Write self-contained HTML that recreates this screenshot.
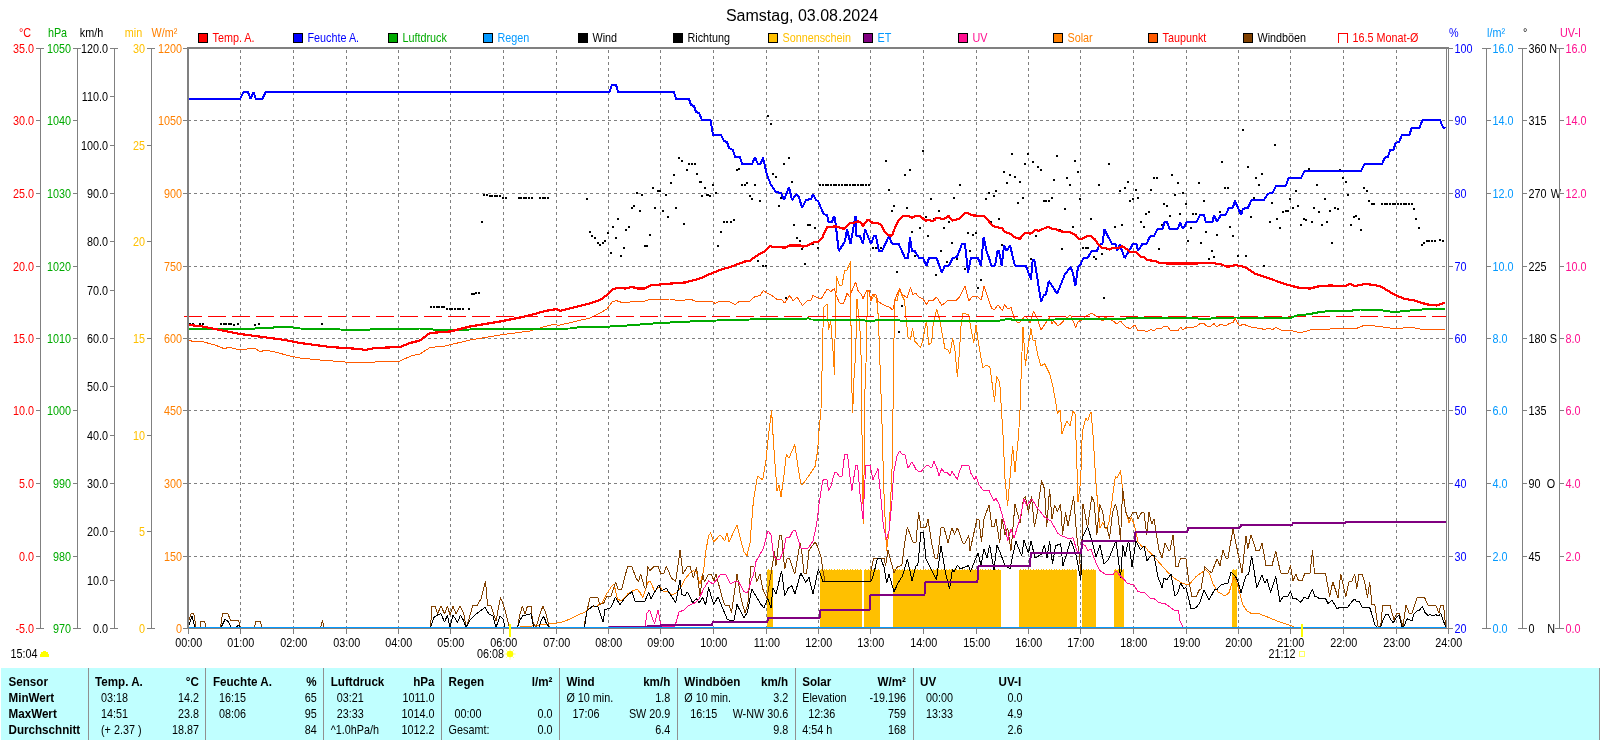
<!DOCTYPE html>
<html lang="de"><head><meta charset="utf-8"><title>Samstag, 03.08.2024</title>
<style>html,body{margin:0;padding:0;background:#fff;overflow:hidden}svg{display:block;will-change:transform}text{font-family:"Liberation Sans",sans-serif;font-size:12px}.b{font-weight:bold}.e{text-anchor:end}.m{text-anchor:middle}.ln{fill:none;stroke-linejoin:bevel;shape-rendering:crispEdges}</style></head><body>
<svg width="1600" height="740" viewBox="0 0 1600 740">
<rect x="0" y="0" width="1600" height="740" fill="#fff"/>
<text x="802" y="20.5" class="m" style="font-size:16px" fill="#000">Samstag, 03.08.2024</text>
<rect x="198.5" y="33.5" width="9" height="9" fill="#ff0000" stroke="#000" stroke-width="1" shape-rendering="crispEdges"/>
<text transform="translate(212.5 41.7) scale(0.9 1)" fill="#ff0000">Temp. A.</text>
<rect x="293.5" y="33.5" width="9" height="9" fill="#0000ff" stroke="#000" stroke-width="1" shape-rendering="crispEdges"/>
<text transform="translate(307.5 41.7) scale(0.9 1)" fill="#0000ff">Feuchte A.</text>
<rect x="388.5" y="33.5" width="9" height="9" fill="#00aa00" stroke="#000" stroke-width="1" shape-rendering="crispEdges"/>
<text transform="translate(402.5 41.7) scale(0.9 1)" fill="#00aa00">Luftdruck</text>
<rect x="483.5" y="33.5" width="9" height="9" fill="#0499ff" stroke="#000" stroke-width="1" shape-rendering="crispEdges"/>
<text transform="translate(497.5 41.7) scale(0.9 1)" fill="#0499ff">Regen</text>
<rect x="578.5" y="33.5" width="9" height="9" fill="#000" stroke="#000" stroke-width="1" shape-rendering="crispEdges"/>
<text transform="translate(592.5 41.7) scale(0.9 1)" fill="#000">Wind</text>
<rect x="673.5" y="33.5" width="9" height="9" fill="#000" stroke="#000" stroke-width="1" shape-rendering="crispEdges"/>
<text transform="translate(687.5 41.7) scale(0.9 1)" fill="#000">Richtung</text>
<rect x="768.5" y="33.5" width="9" height="9" fill="#ffc000" stroke="#000" stroke-width="1" shape-rendering="crispEdges"/>
<text transform="translate(782.5 41.7) scale(0.9 1)" fill="#ffc000">Sonnenschein</text>
<rect x="863.5" y="33.5" width="9" height="9" fill="#800080" stroke="#000" stroke-width="1" shape-rendering="crispEdges"/>
<text transform="translate(877.5 41.7) scale(0.9 1)" fill="#0499ff">ET</text>
<rect x="958.5" y="33.5" width="9" height="9" fill="#ff1090" stroke="#000" stroke-width="1" shape-rendering="crispEdges"/>
<text transform="translate(972.5 41.7) scale(0.9 1)" fill="#ff1090">UV</text>
<rect x="1053.5" y="33.5" width="9" height="9" fill="#ff8000" stroke="#000" stroke-width="1" shape-rendering="crispEdges"/>
<text transform="translate(1067.5 41.7) scale(0.9 1)" fill="#ff8000">Solar</text>
<rect x="1148.5" y="33.5" width="9" height="9" fill="#ff5a00" stroke="#000" stroke-width="1" shape-rendering="crispEdges"/>
<text transform="translate(1162.5 41.7) scale(0.9 1)" fill="#ff0000">Taupunkt</text>
<rect x="1243.5" y="33.5" width="9" height="9" fill="#804000" stroke="#000" stroke-width="1" shape-rendering="crispEdges"/>
<text transform="translate(1257.5 41.7) scale(0.9 1)" fill="#000">Windböen</text>
<path d="M1338.5 42.5V33.5H1347.5V42.5" fill="none" stroke="#ff0000" stroke-width="1" shape-rendering="crispEdges"/>
<text transform="translate(1352.5 41.7) scale(0.9 1)" fill="#ff0000">16.5 Monat-Ø</text>
<line x1="188.0" y1="120.5" x2="1446.0" y2="120.5" stroke="#808080" stroke-width="1" stroke-dasharray="3 3" shape-rendering="crispEdges"/>
<line x1="188.0" y1="193.5" x2="1446.0" y2="193.5" stroke="#808080" stroke-width="1" stroke-dasharray="3 3" shape-rendering="crispEdges"/>
<line x1="188.0" y1="266.5" x2="1446.0" y2="266.5" stroke="#808080" stroke-width="1" stroke-dasharray="3 3" shape-rendering="crispEdges"/>
<line x1="188.0" y1="338.5" x2="1446.0" y2="338.5" stroke="#808080" stroke-width="1" stroke-dasharray="3 3" shape-rendering="crispEdges"/>
<line x1="188.0" y1="410.5" x2="1446.0" y2="410.5" stroke="#808080" stroke-width="1" stroke-dasharray="3 3" shape-rendering="crispEdges"/>
<line x1="188.0" y1="483.5" x2="1446.0" y2="483.5" stroke="#808080" stroke-width="1" stroke-dasharray="3 3" shape-rendering="crispEdges"/>
<line x1="188.0" y1="556.5" x2="1446.0" y2="556.5" stroke="#808080" stroke-width="1" stroke-dasharray="3 3" shape-rendering="crispEdges"/>
<line x1="240.5" y1="50.0" x2="240.5" y2="628.0" stroke="#808080" stroke-width="1" stroke-dasharray="3 3" shape-rendering="crispEdges"/>
<line x1="293.5" y1="50.0" x2="293.5" y2="628.0" stroke="#808080" stroke-width="1" stroke-dasharray="3 3" shape-rendering="crispEdges"/>
<line x1="346.5" y1="50.0" x2="346.5" y2="628.0" stroke="#808080" stroke-width="1" stroke-dasharray="3 3" shape-rendering="crispEdges"/>
<line x1="398.5" y1="50.0" x2="398.5" y2="628.0" stroke="#808080" stroke-width="1" stroke-dasharray="3 3" shape-rendering="crispEdges"/>
<line x1="450.5" y1="50.0" x2="450.5" y2="628.0" stroke="#808080" stroke-width="1" stroke-dasharray="3 3" shape-rendering="crispEdges"/>
<line x1="503.5" y1="50.0" x2="503.5" y2="628.0" stroke="#808080" stroke-width="1" stroke-dasharray="3 3" shape-rendering="crispEdges"/>
<line x1="556.5" y1="50.0" x2="556.5" y2="628.0" stroke="#808080" stroke-width="1" stroke-dasharray="3 3" shape-rendering="crispEdges"/>
<line x1="608.5" y1="50.0" x2="608.5" y2="628.0" stroke="#808080" stroke-width="1" stroke-dasharray="3 3" shape-rendering="crispEdges"/>
<line x1="660.5" y1="50.0" x2="660.5" y2="628.0" stroke="#808080" stroke-width="1" stroke-dasharray="3 3" shape-rendering="crispEdges"/>
<line x1="713.5" y1="50.0" x2="713.5" y2="628.0" stroke="#808080" stroke-width="1" stroke-dasharray="3 3" shape-rendering="crispEdges"/>
<line x1="766.5" y1="50.0" x2="766.5" y2="628.0" stroke="#808080" stroke-width="1" stroke-dasharray="3 3" shape-rendering="crispEdges"/>
<line x1="818.5" y1="50.0" x2="818.5" y2="628.0" stroke="#808080" stroke-width="1" stroke-dasharray="3 3" shape-rendering="crispEdges"/>
<line x1="870.5" y1="50.0" x2="870.5" y2="628.0" stroke="#808080" stroke-width="1" stroke-dasharray="3 3" shape-rendering="crispEdges"/>
<line x1="923.5" y1="50.0" x2="923.5" y2="628.0" stroke="#808080" stroke-width="1" stroke-dasharray="3 3" shape-rendering="crispEdges"/>
<line x1="976.5" y1="50.0" x2="976.5" y2="628.0" stroke="#808080" stroke-width="1" stroke-dasharray="3 3" shape-rendering="crispEdges"/>
<line x1="1028.5" y1="50.0" x2="1028.5" y2="628.0" stroke="#808080" stroke-width="1" stroke-dasharray="3 3" shape-rendering="crispEdges"/>
<line x1="1080.5" y1="50.0" x2="1080.5" y2="628.0" stroke="#808080" stroke-width="1" stroke-dasharray="3 3" shape-rendering="crispEdges"/>
<line x1="1133.5" y1="50.0" x2="1133.5" y2="628.0" stroke="#808080" stroke-width="1" stroke-dasharray="3 3" shape-rendering="crispEdges"/>
<line x1="1186.5" y1="50.0" x2="1186.5" y2="628.0" stroke="#808080" stroke-width="1" stroke-dasharray="3 3" shape-rendering="crispEdges"/>
<line x1="1238.5" y1="50.0" x2="1238.5" y2="628.0" stroke="#808080" stroke-width="1" stroke-dasharray="3 3" shape-rendering="crispEdges"/>
<line x1="1290.5" y1="50.0" x2="1290.5" y2="628.0" stroke="#808080" stroke-width="1" stroke-dasharray="3 3" shape-rendering="crispEdges"/>
<line x1="1343.5" y1="50.0" x2="1343.5" y2="628.0" stroke="#808080" stroke-width="1" stroke-dasharray="3 3" shape-rendering="crispEdges"/>
<line x1="1396.5" y1="50.0" x2="1396.5" y2="628.0" stroke="#808080" stroke-width="1" stroke-dasharray="3 3" shape-rendering="crispEdges"/>
<rect x="767" y="570" width="5.50" height="58.0" fill="#ffc000" shape-rendering="crispEdges"/>
<line x1="768" y1="569.5" x2="772.5" y2="569.5" stroke="#ffc000" stroke-width="1" stroke-dasharray="1 1.6" shape-rendering="crispEdges"/>
<rect x="820" y="570" width="42.00" height="58.0" fill="#ffc000" shape-rendering="crispEdges"/>
<line x1="821" y1="569.5" x2="862" y2="569.5" stroke="#ffc000" stroke-width="1" stroke-dasharray="1 1.6" shape-rendering="crispEdges"/>
<rect x="864" y="570" width="16.00" height="58.0" fill="#ffc000" shape-rendering="crispEdges"/>
<line x1="865" y1="569.5" x2="880" y2="569.5" stroke="#ffc000" stroke-width="1" stroke-dasharray="1 1.6" shape-rendering="crispEdges"/>
<rect x="893" y="570" width="108.00" height="58.0" fill="#ffc000" shape-rendering="crispEdges"/>
<line x1="894" y1="569.5" x2="1001" y2="569.5" stroke="#ffc000" stroke-width="1" stroke-dasharray="1 1.6" shape-rendering="crispEdges"/>
<rect x="1019" y="570" width="58.00" height="58.0" fill="#ffc000" shape-rendering="crispEdges"/>
<line x1="1020" y1="569.5" x2="1077" y2="569.5" stroke="#ffc000" stroke-width="1" stroke-dasharray="1 1.6" shape-rendering="crispEdges"/>
<rect x="1082" y="570" width="14.00" height="58.0" fill="#ffc000" shape-rendering="crispEdges"/>
<line x1="1083" y1="569.5" x2="1096" y2="569.5" stroke="#ffc000" stroke-width="1" stroke-dasharray="1 1.6" shape-rendering="crispEdges"/>
<rect x="1114" y="570" width="10.00" height="58.0" fill="#ffc000" shape-rendering="crispEdges"/>
<line x1="1115" y1="569.5" x2="1124" y2="569.5" stroke="#ffc000" stroke-width="1" stroke-dasharray="1 1.6" shape-rendering="crispEdges"/>
<rect x="1232" y="570" width="5.00" height="58.0" fill="#ffc000" shape-rendering="crispEdges"/>
<line x1="1233" y1="569.5" x2="1237" y2="569.5" stroke="#ffc000" stroke-width="1" stroke-dasharray="1 1.6" shape-rendering="crispEdges"/>
<polyline class="ln" points="520.0,627.0 530.0,626.3 540.0,625.0 550.0,623.8 560.0,622.7 568.4,619.7 577.0,615.4 585.0,612.0 591.0,607.0 597.0,606.0 602.0,602.8 606.5,594.0 610.7,587.6 614.0,584.0 617.4,599.0 621.7,601.0 627.6,594.0 632.6,591.0 636.9,589.0 640.0,592.6 642.8,597.7 647.8,582.5 650.0,580.8 654.6,591.0 659.7,586.7 663.0,591.0 668.0,591.0 672.0,595.0 676.6,592.6 680.8,587.6 685.0,579.0 690.0,573.0 693.4,570.7 696.5,572.0 700.0,584.0 703.6,570.7 706.0,550.0 708.6,536.0 710.7,532.7 713.7,542.0 717.0,538.6 719.6,535.0 722.0,537.0 724.7,541.0 727.0,532.7 729.0,542.0 737.0,524.7 740.0,537.0 744.0,552.0 747.0,555.5 750.0,543.0 753.4,500.7 757.6,476.0 762.7,480.0 766.0,460.0 768.6,434.5 771.6,410.5 773.6,444.6 777.0,490.5 779.0,485.5 781.0,497.0 784.0,475.0 786.3,454.7 789.0,458.0 794.8,444.6 797.0,460.0 800.7,483.8 802.4,484.6 808.0,477.0 815.0,466.6 817.6,451.0 819.0,431.0 821.0,409.0 821.8,380.0 822.6,345.0 823.5,307.4 827.0,304.0 828.5,330.0 830.7,321.0 832.8,348.0 834.5,375.0 835.3,317.6 836.5,276.0 839.5,285.5 842.0,285.0 844.6,271.0 847.0,270.0 850.5,261.5 851.4,375.0 852.7,412.5 853.9,380.0 855.6,354.7 857.0,299.0 859.8,326.0 861.5,367.0 862.3,475.0 863.5,524.0 864.9,392.0 866.5,350.0 867.4,290.5 869.0,292.0 870.8,300.7 874.0,295.6 876.7,299.0 878.4,317.6 880.0,365.0 881.4,405.7 882.6,441.0 883.4,480.0 886.5,551.0 889.0,531.0 891.9,475.0 892.7,431.0 893.9,350.0 894.4,299.0 897.0,300.7 899.5,289.7 902.0,295.6 904.6,300.7 906.0,317.6 908.0,337.0 910.5,339.5 912.5,327.7 914.7,341.0 920.6,347.6 923.0,339.5 926.5,320.0 928.7,344.6 931.6,342.5 933.0,326.0 936.6,309.0 940.0,321.0 942.6,336.0 945.0,348.8 947.6,349.6 950.0,353.4 952.7,337.8 955.0,351.0 957.4,377.0 959.5,351.0 961.0,326.0 962.8,312.8 966.0,314.0 968.8,315.0 971.0,329.4 973.8,343.0 976.0,325.0 978.0,339.5 980.6,356.0 983.0,367.5 986.5,365.0 989.9,367.0 994.6,401.5 996.6,376.0 999.7,382.0 1001.7,414.0 1003.0,434.5 1005.0,478.7 1007.6,505.7 1010.0,478.0 1012.7,446.0 1015.0,472.0 1018.6,434.5 1020.0,410.8 1021.4,367.0 1023.0,327.0 1025.4,365.7 1027.6,350.0 1031.0,328.5 1032.7,340.0 1035.0,340.0 1037.7,354.7 1041.0,366.0 1044.5,363.5 1049.6,373.6 1053.0,387.0 1055.5,400.7 1057.5,414.0 1060.0,410.0 1062.0,434.0 1064.8,426.0 1067.0,421.0 1070.0,426.0 1073.0,410.8 1075.0,414.0 1076.6,454.7 1078.0,502.0 1080.8,480.0 1081.6,444.6 1083.0,429.0 1086.0,417.6 1087.6,421.0 1091.0,411.7 1093.0,434.5 1094.0,451.0 1096.0,483.8 1098.5,512.5 1100.0,527.7 1102.8,522.6 1106.0,529.0 1108.7,524.0 1112.0,500.7 1115.4,476.0 1117.0,477.9 1120.5,470.6 1122.0,483.8 1123.9,500.7 1126.0,512.5 1129.0,522.6 1131.5,517.6 1134.0,524.0 1136.5,534.5 1138.0,542.0 1142.5,547.0 1145.0,546.0 1148.0,551.0 1150.7,553.0 1157.4,560.5 1167.6,572.0 1174.0,578.0 1181.0,582.5 1187.8,585.0 1191.0,582.5 1196.0,576.6 1201.0,573.0 1205.6,569.8 1209.8,574.0 1213.0,584.0 1218.0,591.8 1225.0,596.0 1229.0,592.6 1231.8,584.0 1234.0,577.4 1236.8,582.5 1240.0,594.0 1242.7,604.5 1247.0,611.0 1252.0,613.8 1259.6,614.0 1269.0,617.6 1277.0,621.0 1285.8,624.0 1294.0,626.8" stroke="#ff8000" stroke-width="1" />
<polyline class="ln" points="188.0,340.0 195.0,342.0 200.0,341.0 215.0,345.0 225.0,349.0 228.0,347.0 240.0,350.0 255.0,348.0 260.0,352.0 265.0,350.0 275.0,352.0 290.0,356.0 300.0,358.0 320.0,360.0 345.0,362.0 360.0,363.0 375.0,362.0 400.0,361.0 412.0,355.5 420.0,354.0 430.0,347.5 445.0,346.0 470.0,340.0 500.0,335.0 530.0,331.0 545.0,326.5 555.0,324.0 558.0,325.5 575.0,321.5 590.0,318.0 600.0,313.0 607.0,309.0 612.0,302.0 616.0,300.5 622.0,302.5 630.0,302.0 645.0,301.0 650.0,299.5 670.0,299.0 680.0,301.0 690.0,299.0 695.0,301.0 705.0,302.0 712.0,301.0 715.0,303.5 720.0,301.0 730.0,302.0 735.0,304.5 740.0,301.0 750.0,301.0 755.0,296.5 760.0,295.6 763.5,290.5 767.0,293.0 772.0,295.6 777.0,299.3 781.0,299.0 784.6,303.0 789.7,295.6 793.0,300.7 797.0,297.0 802.4,305.4 807.4,300.7 811.0,300.0 813.0,295.6 817.6,298.0 821.8,298.0 827.0,289.0 831.0,291.4 834.5,288.5 836.0,295.0 839.5,303.0 843.8,303.0 847.0,293.6 849.7,296.5 852.0,290.5 855.6,282.0 858.0,290.5 861.5,294.8 863.0,299.0 866.5,290.5 869.0,290.5 870.8,300.7 872.5,294.0 875.8,294.0 878.0,301.5 885.0,305.7 890.0,307.4 892.7,310.0 896.0,297.0 899.5,288.5 902.0,294.0 907.0,298.0 910.5,287.5 913.0,294.8 915.5,293.0 919.0,297.0 923.0,299.0 926.5,304.4 929.0,300.0 933.0,300.7 936.6,297.0 941.7,305.4 948.5,300.0 956.0,300.7 959.5,297.0 965.0,286.0 968.8,300.7 973.0,296.0 977.0,296.5 981.4,299.8 984.0,285.8 988.0,298.0 991.5,308.0 994.0,310.0 998.0,305.0 1002.5,310.8 1004.7,304.4 1007.6,309.0 1011.0,307.4 1014.0,317.6 1017.0,322.0 1020.0,322.0 1025.0,316.0 1027.6,319.0 1030.0,322.6 1033.5,311.7 1037.0,317.6 1041.0,330.0 1045.0,324.0 1049.6,317.6 1052.0,323.5 1053.8,321.0 1058.0,326.0 1062.0,322.6 1065.6,318.4 1070.7,315.0 1072.4,319.0 1075.7,327.7 1078.0,321.8 1081.6,320.0 1086.7,315.9 1091.8,313.0 1095.0,315.5 1099.0,317.6 1102.8,321.0 1104.5,316.7 1109.5,319.0 1113.0,321.0 1117.0,324.0 1120.5,321.0 1125.6,327.0 1130.0,328.5 1135.0,325.0 1138.0,331.0 1143.0,330.0 1146.7,332.0 1151.0,329.4 1153.4,331.0 1157.7,328.0 1160.0,329.0 1165.0,326.0 1167.8,326.9 1170.0,330.0 1178.0,330.7 1180.5,327.0 1183.0,330.0 1186.0,327.7 1195.7,326.9 1200.0,323.5 1204.0,323.5 1206.7,326.0 1211.0,326.0 1214.0,323.5 1216.8,326.9 1221.0,324.0 1225.0,326.0 1229.5,323.5 1233.0,322.6 1235.0,318.4 1238.0,323.5 1240.0,326.0 1243.0,324.0 1250.0,326.9 1256.5,328.0 1261.6,328.5 1264.0,330.0 1268.0,328.0 1272.5,329.7 1276.0,327.4 1282.0,330.7 1286.0,331.0 1290.0,330.0 1300.0,333.0 1310.0,330.0 1330.0,329.0 1345.0,328.0 1355.0,329.0 1365.0,325.0 1375.0,326.0 1390.0,328.0 1400.0,328.5 1410.0,327.0 1420.0,329.0 1430.0,329.5 1445.0,330.0" stroke="#ff5a00" stroke-width="1" />
<polyline class="ln" points="188.0,622.5 191.0,613.8 193.8,613.8 196.0,627.5 200.0,627.5 201.0,621.0 204.5,621.0 206.0,627.5 220.5,627.5 222.5,613.8 228.0,613.8 230.5,620.5 238.8,621.0 240.5,627.5 254.5,627.5 256.0,621.0 260.0,621.0 262.0,627.5 320.5,627.5 322.5,620.5 324.0,627.5 430.5,627.5 432.0,606.0 435.0,606.0 437.5,613.8 441.0,606.0 444.5,613.8 447.5,606.0 450.0,615.0 453.0,606.0 456.0,613.8 460.0,606.0 463.8,613.8 466.0,627.5 468.8,620.0 472.5,606.0 477.5,605.0 481.0,598.8 485.5,581.0 487.5,605.0 491.0,606.0 496.0,621.0 500.5,597.5 503.8,606.0 506.0,613.8 509.5,627.5 517.5,627.5 520.0,613.8 522.5,606.0 525.0,613.8 527.5,606.0 531.0,606.0 532.5,621.0 536.0,627.5 540.0,613.8 543.0,606.0 546.0,613.8 549.5,627.5 584.0,627.5 585.0,621.0 587.0,611.0 590.0,597.7 598.0,597.7 599.7,604.5 604.0,602.8 606.5,596.9 610.7,596.9 615.7,581.7 618.0,589.0 621.7,589.0 627.6,566.5 631.8,566.5 636.0,578.0 638.5,581.7 640.7,574.0 644.5,587.6 646.0,588.4 647.8,566.5 650.0,570.7 653.8,566.5 658.0,566.5 661.0,574.0 663.9,573.0 666.4,566.5 671.5,578.0 675.7,581.7 680.0,550.4 683.0,574.0 687.5,566.5 690.0,566.5 693.4,578.0 696.5,567.0 700.0,596.0 702.7,574.0 704.4,581.7 708.6,574.0 711.0,574.0 714.0,580.8 716.0,574.0 722.0,596.9 724.7,605.0 729.0,605.0 731.5,613.0 737.0,574.0 740.7,596.9 745.0,613.0 747.8,604.5 751.0,566.5 754.0,567.0 756.8,581.7 760.0,574.0 762.7,589.0 767.0,597.7 771.0,574.0 774.5,551.0 776.0,565.6 779.6,535.0 781.6,535.5 784.7,569.0 787.0,558.9 789.7,558.9 794.8,574.0 800.0,542.8 801.6,550.4 804.0,573.0 806.6,573.0 809.0,550.4 815.0,542.0 816.7,544.6 821.0,557.0 823.5,574.0 825.0,581.0 870.5,581.0 870.5,574.0 873.6,558.5 884.0,558.5 885.7,565.6 888.0,550.0 894.0,573.0 897.6,566.5 901.8,565.6 904.6,543.0 907.4,527.0 912.8,542.0 916.0,542.0 918.6,512.5 921.0,527.7 925.7,527.7 928.0,519.0 931.6,543.0 935.0,558.0 937.5,558.0 941.0,527.7 944.0,527.7 948.0,542.6 952.0,527.7 954.4,534.5 957.4,527.7 962.8,543.0 965.0,543.0 968.8,535.0 970.0,550.5 977.0,519.0 979.0,519.5 981.4,542.0 984.0,519.0 989.0,505.0 992.0,526.9 994.0,526.9 996.0,519.0 999.7,543.0 1002.0,519.0 1005.0,534.5 1007.6,527.7 1011.0,550.5 1015.0,504.0 1020.0,523.0 1023.4,499.0 1025.4,496.5 1028.4,512.5 1031.5,496.5 1034.4,526.9 1037.0,514.0 1041.6,480.4 1044.5,488.9 1046.7,526.9 1049.6,488.9 1052.0,519.0 1054.6,505.0 1057.5,511.7 1060.5,504.0 1062.6,534.5 1065.6,512.5 1068.0,526.0 1073.7,496.5 1076.6,534.5 1079.5,558.0 1081.0,575.0 1083.0,504.0 1087.6,527.7 1091.8,496.5 1094.0,502.0 1096.9,534.5 1099.7,504.0 1102.8,512.5 1105.0,527.7 1107.0,526.9 1109.5,538.7 1112.6,512.5 1115.4,504.0 1117.6,511.7 1120.5,539.5 1122.7,488.0 1125.6,511.7 1129.0,519.0 1133.0,512.5 1136.5,512.5 1138.0,519.0 1141.6,512.5 1144.0,512.5 1146.7,534.5 1149.0,512.5 1151.8,524.0 1154.0,519.0 1156.5,534.5 1159.0,549.7 1162.0,558.0 1165.0,543.0 1168.6,550.5 1170.0,550.5 1173.0,535.0 1176.0,566.6 1178.0,566.6 1180.5,558.0 1186.0,558.5 1188.7,580.8 1192.0,596.9 1196.0,596.9 1199.7,589.0 1201.0,589.0 1204.7,566.5 1208.0,569.8 1211.5,573.0 1217.0,558.9 1220.0,565.6 1223.0,550.4 1225.8,558.0 1228.0,558.0 1233.0,529.0 1236.0,543.6 1242.0,573.0 1246.0,536.0 1247.8,548.7 1251.0,535.0 1256.0,550.4 1259.6,550.4 1262.0,542.8 1266.0,565.6 1272.0,565.6 1275.7,551.0 1280.7,573.0 1288.0,573.0 1290.5,565.6 1293.0,580.8 1296.0,574.0 1298.5,580.8 1302.0,580.8 1305.0,573.0 1310.0,573.0 1312.5,550.4 1314.5,573.0 1325.5,573.0 1329.7,596.9 1332.8,581.7 1338.0,597.7 1340.7,574.0 1345.8,596.9 1349.0,581.7 1351.7,581.7 1354.7,574.0 1356.8,589.0 1359.0,574.0 1361.8,574.0 1364.6,581.7 1367.5,597.7 1369.7,581.7 1372.0,604.5 1374.8,604.5 1378.0,626.4 1380.7,626.4 1382.7,605.0 1390.0,605.0 1393.9,619.7 1396.7,613.0 1399.0,613.0 1403.0,626.4 1406.0,605.0 1409.4,613.8 1412.0,613.0 1417.0,597.7 1424.6,597.7 1428.0,605.0 1435.6,605.0 1439.0,613.0 1440.6,605.0 1443.5,605.0 1445.7,626.4" stroke="#804000" stroke-width="1" />
<polyline class="ln" points="188.0,627.5 192.0,616.0 195.0,627.5 221.0,627.5 225.0,619.5 227.5,620.5 231.0,627.0 236.0,627.5 238.8,625.0 240.5,627.5 430.5,627.5 433.8,617.5 437.5,615.0 441.0,613.8 444.5,622.0 447.5,615.0 450.0,627.5 453.0,615.0 457.5,622.5 460.5,615.0 463.8,621.0 466.0,627.5 470.0,620.0 475.0,615.0 480.0,611.0 485.0,607.5 488.8,613.8 493.0,616.0 496.0,627.5 500.0,616.0 503.0,618.8 505.0,627.5 517.5,627.5 520.0,620.0 522.5,616.0 531.0,613.8 533.8,627.5 538.8,627.5 541.0,621.0 543.8,616.0 546.0,622.5 549.5,627.5 584.5,627.5 587.0,611.0 593.0,605.8 598.0,607.0 603.0,622.0 605.0,609.5 610.7,607.8 615.4,597.4 620.0,604.5 625.0,597.7 631.8,591.8 635.0,601.0 644.5,602.0 648.7,592.6 651.0,598.5 658.8,585.0 661.0,591.0 666.4,588.4 675.7,602.8 680.0,580.0 681.6,594.0 685.0,596.0 687.5,591.8 692.6,602.8 696.5,598.5 699.0,602.8 702.7,597.7 705.6,605.0 708.6,587.6 713.7,604.5 718.0,596.9 727.0,618.8 729.7,620.5 734.0,620.5 737.0,604.5 744.0,618.0 747.5,612.0 751.7,589.0 761.0,604.5 764.0,607.8 767.8,598.5 771.0,607.8 773.0,587.6 776.0,594.0 781.6,570.7 784.7,596.0 788.0,588.4 791.8,585.9 795.0,594.0 800.7,573.0 805.8,582.5 809.0,577.4 813.0,594.0 818.4,569.0 823.0,581.5 870.7,581.5 872.3,578.0 874.5,570.8 877.2,558.9 880.7,558.5 884.0,567.0 886.6,583.0 889.0,574.0 894.0,591.8 897.6,584.0 902.6,575.7 907.4,558.9 912.0,580.8 916.0,565.6 917.8,565.6 921.0,532.0 923.4,532.0 926.0,558.9 931.0,569.0 936.4,580.0 941.0,546.0 945.7,574.0 949.6,589.0 952.5,569.0 954.0,572.0 957.5,564.8 960.0,569.0 968.5,565.6 970.5,571.5 973.6,563.9 978.0,553.0 981.0,565.6 984.0,548.7 987.0,558.0 989.6,545.0 994.0,569.8 997.0,545.0 1000.6,553.8 1004.8,564.8 1010.0,569.0 1015.8,541.0 1021.7,556.0 1024.0,540.0 1028.5,553.0 1031.0,541.0 1035.0,558.0 1041.0,554.6 1044.5,545.0 1047.0,558.0 1049.6,541.0 1052.6,563.9 1055.5,546.0 1060.6,543.6 1063.0,565.6 1070.7,540.0 1075.8,553.8 1080.8,580.0 1082.5,537.0 1087.6,527.0 1091.8,540.0 1096.0,557.0 1100.0,545.0 1104.0,563.9 1108.4,559.7 1116.0,541.0 1120.6,578.0 1122.8,545.0 1125.0,556.0 1128.7,540.0 1132.0,567.0 1136.0,541.0 1140.5,549.6 1144.0,546.0 1147.0,561.0 1150.7,556.0 1154.0,555.5 1158.0,577.0 1162.0,587.6 1164.0,578.0 1166.7,580.0 1171.0,574.0 1175.0,596.0 1177.7,593.5 1180.7,583.0 1183.6,588.4 1186.0,587.6 1191.0,608.7 1196.0,607.8 1199.7,602.8 1204.0,590.0 1209.0,600.0 1215.0,589.0 1216.5,590.0 1220.8,585.0 1228.0,583.0 1231.0,572.0 1235.0,575.7 1237.7,580.8 1241.0,592.6 1246.0,575.7 1248.6,574.0 1251.7,556.0 1256.8,587.6 1262.0,575.0 1264.7,583.0 1267.0,579.0 1270.6,592.6 1275.7,576.6 1280.0,602.0 1283.0,596.9 1287.5,596.9 1290.5,591.0 1293.0,599.0 1296.0,598.5 1301.0,602.4 1304.0,596.9 1307.8,599.0 1312.5,589.0 1314.5,596.0 1317.0,596.9 1320.0,599.0 1325.5,598.5 1328.0,603.6 1332.0,600.0 1337.0,608.7 1340.7,607.0 1343.0,607.8 1348.0,607.0 1351.7,602.0 1354.7,599.0 1356.8,602.0 1359.0,601.0 1361.8,607.0 1365.0,608.0 1369.7,607.5 1372.0,614.6 1374.8,624.7 1377.0,627.0 1380.7,627.0 1383.0,619.7 1385.7,614.6 1388.0,614.6 1393.0,623.0 1396.7,617.0 1399.0,615.4 1401.8,626.4 1404.0,626.4 1406.9,618.8 1409.4,619.7 1412.0,621.0 1414.0,613.8 1417.0,611.0 1419.5,610.0 1422.6,606.5 1424.6,612.0 1428.0,615.4 1430.5,614.6 1433.0,616.0 1435.6,614.6 1439.0,616.0 1440.6,613.0 1443.0,619.7 1445.7,627.0" stroke="#000" stroke-width="1" />
<polyline class="ln" points="645.0,626.4 647.0,613.0 649.5,610.0 654.6,624.0 658.0,610.0 661.0,626.0 674.9,626.4 679.0,612.0 684.0,610.0 688.0,606.0 695.0,602.8 699.0,599.0 703.6,589.0 708.6,580.8 713.0,584.0 718.0,578.0 721.0,574.0 726.0,575.0 730.6,584.0 735.7,581.0 739.0,582.5 744.0,591.8 747.5,592.6 751.7,579.0 753.4,575.0 756.0,561.5 759.0,556.0 763.5,548.0 767.7,530.7 771.0,534.5 773.6,555.6 777.0,560.0 780.0,559.0 783.8,549.7 786.0,537.8 789.7,537.0 793.0,530.7 795.6,531.0 800.7,548.0 808.0,548.3 813.0,541.0 816.7,524.0 819.0,504.0 822.6,481.0 823.5,479.6 827.0,480.0 828.5,490.5 831.0,486.0 834.5,472.8 837.0,472.8 839.0,476.0 842.0,476.0 844.6,454.7 847.5,454.7 849.7,474.5 852.0,490.5 855.6,465.5 857.6,465.5 859.8,492.0 863.0,519.0 865.0,480.0 865.7,465.5 870.0,465.5 873.0,479.6 878.0,468.6 881.0,499.0 883.4,526.0 886.5,539.5 889.0,531.0 892.0,500.7 893.6,473.6 897.0,456.0 899.5,451.0 902.0,454.0 905.0,454.7 908.0,468.0 912.0,461.8 916.0,469.4 919.0,472.0 921.5,471.0 925.7,466.0 928.0,465.5 931.6,468.0 934.0,461.5 936.6,467.0 939.0,476.0 941.7,468.6 944.0,472.0 947.6,472.8 950.0,476.0 952.0,471.6 957.4,479.6 959.5,471.0 962.0,465.5 968.8,465.5 971.0,473.6 974.7,479.6 976.0,476.0 978.9,484.6 983.0,490.0 989.0,490.5 990.7,494.8 994.0,500.7 996.0,498.6 999.0,504.0 1002.5,516.0 1005.0,525.0 1007.6,541.0 1011.0,529.0 1014.0,537.8 1020.0,519.0 1024.0,499.0 1026.7,505.7 1031.8,499.0 1037.0,507.4 1045.0,517.6 1051.0,521.0 1058.0,533.6 1062.0,536.0 1069.0,538.7 1073.0,537.8 1077.0,551.0 1080.8,553.0 1082.5,544.6 1085.0,545.4 1088.0,551.0 1091.0,548.8 1094.0,558.0 1097.7,566.6 1100.0,570.7 1105.0,574.0 1113.5,574.0 1116.0,570.7 1118.6,574.0 1123.6,579.0 1127.0,583.0 1133.8,585.0 1138.0,591.8 1144.8,592.6 1150.7,598.5 1154.0,598.5 1159.0,602.8 1165.0,603.6 1171.0,607.8 1174.0,610.0 1178.5,611.0 1180.0,621.0 1182.8,627.0" stroke="#ff1090" stroke-width="1" />
<rect x="189.3" y="323.0" width="2" height="2" fill="#000" shape-rendering="crispEdges"/>
<rect x="191.9" y="323.0" width="2" height="2" fill="#000" shape-rendering="crispEdges"/>
<rect x="199.0" y="323.0" width="2" height="2" fill="#000" shape-rendering="crispEdges"/>
<rect x="201.6" y="323.0" width="2" height="2" fill="#000" shape-rendering="crispEdges"/>
<rect x="220.0" y="323.0" width="2" height="2" fill="#000" shape-rendering="crispEdges"/>
<rect x="222.6" y="323.0" width="2" height="2" fill="#000" shape-rendering="crispEdges"/>
<rect x="225.2" y="323.0" width="2" height="2" fill="#000" shape-rendering="crispEdges"/>
<rect x="227.8" y="323.0" width="2" height="2" fill="#000" shape-rendering="crispEdges"/>
<rect x="230.4" y="323.0" width="2" height="2" fill="#000" shape-rendering="crispEdges"/>
<rect x="233.4" y="324.0" width="2" height="2" fill="#000" shape-rendering="crispEdges"/>
<rect x="236.8" y="323.0" width="2" height="2" fill="#000" shape-rendering="crispEdges"/>
<rect x="254.4" y="324.0" width="2" height="2" fill="#000" shape-rendering="crispEdges"/>
<rect x="257.8" y="323.0" width="2" height="2" fill="#000" shape-rendering="crispEdges"/>
<rect x="321.0" y="323.0" width="2" height="2" fill="#000" shape-rendering="crispEdges"/>
<rect x="430.3" y="306.2" width="2" height="2" fill="#000" shape-rendering="crispEdges"/>
<rect x="432.9" y="306.2" width="2" height="2" fill="#000" shape-rendering="crispEdges"/>
<rect x="435.5" y="306.2" width="2" height="2" fill="#000" shape-rendering="crispEdges"/>
<rect x="438.1" y="306.2" width="2" height="2" fill="#000" shape-rendering="crispEdges"/>
<rect x="440.7" y="306.2" width="2" height="2" fill="#000" shape-rendering="crispEdges"/>
<rect x="443.3" y="306.2" width="2" height="2" fill="#000" shape-rendering="crispEdges"/>
<rect x="446.2" y="307.9" width="2" height="2" fill="#000" shape-rendering="crispEdges"/>
<rect x="448.8" y="307.9" width="2" height="2" fill="#000" shape-rendering="crispEdges"/>
<rect x="451.4" y="307.9" width="2" height="2" fill="#000" shape-rendering="crispEdges"/>
<rect x="454.0" y="307.9" width="2" height="2" fill="#000" shape-rendering="crispEdges"/>
<rect x="456.6" y="307.9" width="2" height="2" fill="#000" shape-rendering="crispEdges"/>
<rect x="459.2" y="307.9" width="2" height="2" fill="#000" shape-rendering="crispEdges"/>
<rect x="461.8" y="307.9" width="2" height="2" fill="#000" shape-rendering="crispEdges"/>
<rect x="467.8" y="307.9" width="2" height="2" fill="#000" shape-rendering="crispEdges"/>
<rect x="470.7" y="292.8" width="2" height="2" fill="#000" shape-rendering="crispEdges"/>
<rect x="473.3" y="292.8" width="2" height="2" fill="#000" shape-rendering="crispEdges"/>
<rect x="475.4" y="292.0" width="2" height="2" fill="#000" shape-rendering="crispEdges"/>
<rect x="478.0" y="292.0" width="2" height="2" fill="#000" shape-rendering="crispEdges"/>
<rect x="481.0" y="220.9" width="2" height="2" fill="#000" shape-rendering="crispEdges"/>
<rect x="483.2" y="193.7" width="2" height="2" fill="#000" shape-rendering="crispEdges"/>
<rect x="485.8" y="193.7" width="2" height="2" fill="#000" shape-rendering="crispEdges"/>
<rect x="488.5" y="195.0" width="2" height="2" fill="#000" shape-rendering="crispEdges"/>
<rect x="491.1" y="195.0" width="2" height="2" fill="#000" shape-rendering="crispEdges"/>
<rect x="493.7" y="195.0" width="2" height="2" fill="#000" shape-rendering="crispEdges"/>
<rect x="496.3" y="195.0" width="2" height="2" fill="#000" shape-rendering="crispEdges"/>
<rect x="498.9" y="195.0" width="2" height="2" fill="#000" shape-rendering="crispEdges"/>
<rect x="501.7" y="196.8" width="2" height="2" fill="#000" shape-rendering="crispEdges"/>
<rect x="505.0" y="197.0" width="2" height="2" fill="#000" shape-rendering="crispEdges"/>
<rect x="517.6" y="197.0" width="2" height="2" fill="#000" shape-rendering="crispEdges"/>
<rect x="520.2" y="197.0" width="2" height="2" fill="#000" shape-rendering="crispEdges"/>
<rect x="522.8" y="197.0" width="2" height="2" fill="#000" shape-rendering="crispEdges"/>
<rect x="525.4" y="197.0" width="2" height="2" fill="#000" shape-rendering="crispEdges"/>
<rect x="528.0" y="197.0" width="2" height="2" fill="#000" shape-rendering="crispEdges"/>
<rect x="530.6" y="197.0" width="2" height="2" fill="#000" shape-rendering="crispEdges"/>
<rect x="538.9" y="197.0" width="2" height="2" fill="#000" shape-rendering="crispEdges"/>
<rect x="541.5" y="197.0" width="2" height="2" fill="#000" shape-rendering="crispEdges"/>
<rect x="544.1" y="197.0" width="2" height="2" fill="#000" shape-rendering="crispEdges"/>
<rect x="546.7" y="197.0" width="2" height="2" fill="#000" shape-rendering="crispEdges"/>
<rect x="585.8" y="197.8" width="2" height="2" fill="#000" shape-rendering="crispEdges"/>
<rect x="589.0" y="230.9" width="2" height="2" fill="#000" shape-rendering="crispEdges"/>
<rect x="590.9" y="234.8" width="2" height="2" fill="#000" shape-rendering="crispEdges"/>
<rect x="594.0" y="236.9" width="2" height="2" fill="#000" shape-rendering="crispEdges"/>
<rect x="597.0" y="241.9" width="2" height="2" fill="#000" shape-rendering="crispEdges"/>
<rect x="599.0" y="244.0" width="2" height="2" fill="#000" shape-rendering="crispEdges"/>
<rect x="601.6" y="241.9" width="2" height="2" fill="#000" shape-rendering="crispEdges"/>
<rect x="604.0" y="240.0" width="2" height="2" fill="#000" shape-rendering="crispEdges"/>
<rect x="606.9" y="232.0" width="2" height="2" fill="#000" shape-rendering="crispEdges"/>
<rect x="609.9" y="251.9" width="2" height="2" fill="#000" shape-rendering="crispEdges"/>
<rect x="611.9" y="225.8" width="2" height="2" fill="#000" shape-rendering="crispEdges"/>
<rect x="614.8" y="236.9" width="2" height="2" fill="#000" shape-rendering="crispEdges"/>
<rect x="616.8" y="217.9" width="2" height="2" fill="#000" shape-rendering="crispEdges"/>
<rect x="619.8" y="254.9" width="2" height="2" fill="#000" shape-rendering="crispEdges"/>
<rect x="622.8" y="246.8" width="2" height="2" fill="#000" shape-rendering="crispEdges"/>
<rect x="624.9" y="229.0" width="2" height="2" fill="#000" shape-rendering="crispEdges"/>
<rect x="627.9" y="226.0" width="2" height="2" fill="#000" shape-rendering="crispEdges"/>
<rect x="630.9" y="206.8" width="2" height="2" fill="#000" shape-rendering="crispEdges"/>
<rect x="632.8" y="204.9" width="2" height="2" fill="#000" shape-rendering="crispEdges"/>
<rect x="636.0" y="191.8" width="2" height="2" fill="#000" shape-rendering="crispEdges"/>
<rect x="639.0" y="209.8" width="2" height="2" fill="#000" shape-rendering="crispEdges"/>
<rect x="641.0" y="193.7" width="2" height="2" fill="#000" shape-rendering="crispEdges"/>
<rect x="643.7" y="244.9" width="2" height="2" fill="#000" shape-rendering="crispEdges"/>
<rect x="646.3" y="244.9" width="2" height="2" fill="#000" shape-rendering="crispEdges"/>
<rect x="649.0" y="233.9" width="2" height="2" fill="#000" shape-rendering="crispEdges"/>
<rect x="652.0" y="186.9" width="2" height="2" fill="#000" shape-rendering="crispEdges"/>
<rect x="654.0" y="206.8" width="2" height="2" fill="#000" shape-rendering="crispEdges"/>
<rect x="656.6" y="189.9" width="2" height="2" fill="#000" shape-rendering="crispEdges"/>
<rect x="659.0" y="189.9" width="2" height="2" fill="#000" shape-rendering="crispEdges"/>
<rect x="661.9" y="209.8" width="2" height="2" fill="#000" shape-rendering="crispEdges"/>
<rect x="664.9" y="193.7" width="2" height="2" fill="#000" shape-rendering="crispEdges"/>
<rect x="667.0" y="215.8" width="2" height="2" fill="#000" shape-rendering="crispEdges"/>
<rect x="670.0" y="181.8" width="2" height="2" fill="#000" shape-rendering="crispEdges"/>
<rect x="674.9" y="206.8" width="2" height="2" fill="#000" shape-rendering="crispEdges"/>
<rect x="683.0" y="223.0" width="2" height="2" fill="#000" shape-rendering="crispEdges"/>
<rect x="700.0" y="180.9" width="2" height="2" fill="#000" shape-rendering="crispEdges"/>
<rect x="700.8" y="195.0" width="2" height="2" fill="#000" shape-rendering="crispEdges"/>
<rect x="704.0" y="186.9" width="2" height="2" fill="#000" shape-rendering="crispEdges"/>
<rect x="706.4" y="194.0" width="2" height="2" fill="#000" shape-rendering="crispEdges"/>
<rect x="709.2" y="195.0" width="2" height="2" fill="#000" shape-rendering="crispEdges"/>
<rect x="712.0" y="183.7" width="2" height="2" fill="#000" shape-rendering="crispEdges"/>
<rect x="714.9" y="191.8" width="2" height="2" fill="#000" shape-rendering="crispEdges"/>
<rect x="717.0" y="244.9" width="2" height="2" fill="#000" shape-rendering="crispEdges"/>
<rect x="612.0" y="226.0" width="2" height="2" fill="#000" shape-rendering="crispEdges"/>
<rect x="617.0" y="218.0" width="2" height="2" fill="#000" shape-rendering="crispEdges"/>
<rect x="624.9" y="228.9" width="2" height="2" fill="#000" shape-rendering="crispEdges"/>
<rect x="627.7" y="226.0" width="2" height="2" fill="#000" shape-rendering="crispEdges"/>
<rect x="673.0" y="173.8" width="2" height="2" fill="#000" shape-rendering="crispEdges"/>
<rect x="677.9" y="156.9" width="2" height="2" fill="#000" shape-rendering="crispEdges"/>
<rect x="680.9" y="159.9" width="2" height="2" fill="#000" shape-rendering="crispEdges"/>
<rect x="686.0" y="169.0" width="2" height="2" fill="#000" shape-rendering="crispEdges"/>
<rect x="688.0" y="163.0" width="2" height="2" fill="#000" shape-rendering="crispEdges"/>
<rect x="691.0" y="163.0" width="2" height="2" fill="#000" shape-rendering="crispEdges"/>
<rect x="694.0" y="163.0" width="2" height="2" fill="#000" shape-rendering="crispEdges"/>
<rect x="696.0" y="172.9" width="2" height="2" fill="#000" shape-rendering="crispEdges"/>
<rect x="699.0" y="180.8" width="2" height="2" fill="#000" shape-rendering="crispEdges"/>
<rect x="701.0" y="194.9" width="2" height="2" fill="#000" shape-rendering="crispEdges"/>
<rect x="703.8" y="186.8" width="2" height="2" fill="#000" shape-rendering="crispEdges"/>
<rect x="707.0" y="194.2" width="2" height="2" fill="#000" shape-rendering="crispEdges"/>
<rect x="709.0" y="194.9" width="2" height="2" fill="#000" shape-rendering="crispEdges"/>
<rect x="711.9" y="183.8" width="2" height="2" fill="#000" shape-rendering="crispEdges"/>
<rect x="720.0" y="230.8" width="2" height="2" fill="#000" shape-rendering="crispEdges"/>
<rect x="723.0" y="220.8" width="2" height="2" fill="#000" shape-rendering="crispEdges"/>
<rect x="726.0" y="220.8" width="2" height="2" fill="#000" shape-rendering="crispEdges"/>
<rect x="729.5" y="220.8" width="2" height="2" fill="#000" shape-rendering="crispEdges"/>
<rect x="732.8" y="219.0" width="2" height="2" fill="#000" shape-rendering="crispEdges"/>
<rect x="735.8" y="169.0" width="2" height="2" fill="#000" shape-rendering="crispEdges"/>
<rect x="738.0" y="168.0" width="2" height="2" fill="#000" shape-rendering="crispEdges"/>
<rect x="740.8" y="183.8" width="2" height="2" fill="#000" shape-rendering="crispEdges"/>
<rect x="743.6" y="183.8" width="2" height="2" fill="#000" shape-rendering="crispEdges"/>
<rect x="745.9" y="181.9" width="2" height="2" fill="#000" shape-rendering="crispEdges"/>
<rect x="748.9" y="194.9" width="2" height="2" fill="#000" shape-rendering="crispEdges"/>
<rect x="750.8" y="197.9" width="2" height="2" fill="#000" shape-rendering="crispEdges"/>
<rect x="754.0" y="183.8" width="2" height="2" fill="#000" shape-rendering="crispEdges"/>
<rect x="758.9" y="200.0" width="2" height="2" fill="#000" shape-rendering="crispEdges"/>
<rect x="766.8" y="115.0" width="2" height="2" fill="#000" shape-rendering="crispEdges"/>
<rect x="770.0" y="122.9" width="2" height="2" fill="#000" shape-rendering="crispEdges"/>
<rect x="771.8" y="172.9" width="2" height="2" fill="#000" shape-rendering="crispEdges"/>
<rect x="774.8" y="175.9" width="2" height="2" fill="#000" shape-rendering="crispEdges"/>
<rect x="777.8" y="205.0" width="2" height="2" fill="#000" shape-rendering="crispEdges"/>
<rect x="779.9" y="197.0" width="2" height="2" fill="#000" shape-rendering="crispEdges"/>
<rect x="782.9" y="163.0" width="2" height="2" fill="#000" shape-rendering="crispEdges"/>
<rect x="787.8" y="156.9" width="2" height="2" fill="#000" shape-rendering="crispEdges"/>
<rect x="790.8" y="180.8" width="2" height="2" fill="#000" shape-rendering="crispEdges"/>
<rect x="792.9" y="224.0" width="2" height="2" fill="#000" shape-rendering="crispEdges"/>
<rect x="806.6" y="223.6" width="2" height="2" fill="#000" shape-rendering="crispEdges"/>
<rect x="808.8" y="223.6" width="2" height="2" fill="#000" shape-rendering="crispEdges"/>
<rect x="813.9" y="227.0" width="2" height="2" fill="#000" shape-rendering="crispEdges"/>
<rect x="819.2" y="183.8" width="2" height="2" fill="#000" shape-rendering="crispEdges"/>
<rect x="821.9" y="183.8" width="2" height="2" fill="#000" shape-rendering="crispEdges"/>
<rect x="824.6" y="183.8" width="2" height="2" fill="#000" shape-rendering="crispEdges"/>
<rect x="827.3" y="183.8" width="2" height="2" fill="#000" shape-rendering="crispEdges"/>
<rect x="830.0" y="183.8" width="2" height="2" fill="#000" shape-rendering="crispEdges"/>
<rect x="832.7" y="183.8" width="2" height="2" fill="#000" shape-rendering="crispEdges"/>
<rect x="835.4" y="183.8" width="2" height="2" fill="#000" shape-rendering="crispEdges"/>
<rect x="838.1" y="183.8" width="2" height="2" fill="#000" shape-rendering="crispEdges"/>
<rect x="840.8" y="183.8" width="2" height="2" fill="#000" shape-rendering="crispEdges"/>
<rect x="843.5" y="183.8" width="2" height="2" fill="#000" shape-rendering="crispEdges"/>
<rect x="846.2" y="183.8" width="2" height="2" fill="#000" shape-rendering="crispEdges"/>
<rect x="848.9" y="183.8" width="2" height="2" fill="#000" shape-rendering="crispEdges"/>
<rect x="851.6" y="183.8" width="2" height="2" fill="#000" shape-rendering="crispEdges"/>
<rect x="854.3" y="183.8" width="2" height="2" fill="#000" shape-rendering="crispEdges"/>
<rect x="857.0" y="183.8" width="2" height="2" fill="#000" shape-rendering="crispEdges"/>
<rect x="859.7" y="183.8" width="2" height="2" fill="#000" shape-rendering="crispEdges"/>
<rect x="862.4" y="183.8" width="2" height="2" fill="#000" shape-rendering="crispEdges"/>
<rect x="865.1" y="183.8" width="2" height="2" fill="#000" shape-rendering="crispEdges"/>
<rect x="867.8" y="183.8" width="2" height="2" fill="#000" shape-rendering="crispEdges"/>
<rect x="717.0" y="245.0" width="2" height="2" fill="#000" shape-rendering="crispEdges"/>
<rect x="719.9" y="231.0" width="2" height="2" fill="#000" shape-rendering="crispEdges"/>
<rect x="756.9" y="260.0" width="2" height="2" fill="#000" shape-rendering="crispEdges"/>
<rect x="762.0" y="265.0" width="2" height="2" fill="#000" shape-rendering="crispEdges"/>
<rect x="764.8" y="265.0" width="2" height="2" fill="#000" shape-rendering="crispEdges"/>
<rect x="785.0" y="296.9" width="2" height="2" fill="#000" shape-rendering="crispEdges"/>
<rect x="796.0" y="237.0" width="2" height="2" fill="#000" shape-rendering="crispEdges"/>
<rect x="799.0" y="240.0" width="2" height="2" fill="#000" shape-rendering="crispEdges"/>
<rect x="801.0" y="248.0" width="2" height="2" fill="#000" shape-rendering="crispEdges"/>
<rect x="803.8" y="262.9" width="2" height="2" fill="#000" shape-rendering="crispEdges"/>
<rect x="811.9" y="243.0" width="2" height="2" fill="#000" shape-rendering="crispEdges"/>
<rect x="814.0" y="226.8" width="2" height="2" fill="#000" shape-rendering="crispEdges"/>
<rect x="817.0" y="246.9" width="2" height="2" fill="#000" shape-rendering="crispEdges"/>
<rect x="793.0" y="224.0" width="2" height="2" fill="#000" shape-rendering="crispEdges"/>
<rect x="807.0" y="224.0" width="2" height="2" fill="#000" shape-rendering="crispEdges"/>
<rect x="871.8" y="246.9" width="2" height="2" fill="#000" shape-rendering="crispEdges"/>
<rect x="874.6" y="246.9" width="2" height="2" fill="#000" shape-rendering="crispEdges"/>
<rect x="879.9" y="246.9" width="2" height="2" fill="#000" shape-rendering="crispEdges"/>
<rect x="895.9" y="271.0" width="2" height="2" fill="#000" shape-rendering="crispEdges"/>
<rect x="901.0" y="305.0" width="2" height="2" fill="#000" shape-rendering="crispEdges"/>
<rect x="898.0" y="330.9" width="2" height="2" fill="#000" shape-rendering="crispEdges"/>
<rect x="910.9" y="231.0" width="2" height="2" fill="#000" shape-rendering="crispEdges"/>
<rect x="913.9" y="255.0" width="2" height="2" fill="#000" shape-rendering="crispEdges"/>
<rect x="918.8" y="226.8" width="2" height="2" fill="#000" shape-rendering="crispEdges"/>
<rect x="926.9" y="234.9" width="2" height="2" fill="#000" shape-rendering="crispEdges"/>
<rect x="935.0" y="274.0" width="2" height="2" fill="#000" shape-rendering="crispEdges"/>
<rect x="940.0" y="249.9" width="2" height="2" fill="#000" shape-rendering="crispEdges"/>
<rect x="942.8" y="226.8" width="2" height="2" fill="#000" shape-rendering="crispEdges"/>
<rect x="946.0" y="261.0" width="2" height="2" fill="#000" shape-rendering="crispEdges"/>
<rect x="950.9" y="242.0" width="2" height="2" fill="#000" shape-rendering="crispEdges"/>
<rect x="956.0" y="258.0" width="2" height="2" fill="#000" shape-rendering="crispEdges"/>
<rect x="963.9" y="268.0" width="2" height="2" fill="#000" shape-rendering="crispEdges"/>
<rect x="966.9" y="231.9" width="2" height="2" fill="#000" shape-rendering="crispEdges"/>
<rect x="968.9" y="249.9" width="2" height="2" fill="#000" shape-rendering="crispEdges"/>
<rect x="972.0" y="234.0" width="2" height="2" fill="#000" shape-rendering="crispEdges"/>
<rect x="974.8" y="231.9" width="2" height="2" fill="#000" shape-rendering="crispEdges"/>
<rect x="977.0" y="286.9" width="2" height="2" fill="#000" shape-rendering="crispEdges"/>
<rect x="979.9" y="278.9" width="2" height="2" fill="#000" shape-rendering="crispEdges"/>
<rect x="885.0" y="159.9" width="2" height="2" fill="#000" shape-rendering="crispEdges"/>
<rect x="888.0" y="188.9" width="2" height="2" fill="#000" shape-rendering="crispEdges"/>
<rect x="891.0" y="209.9" width="2" height="2" fill="#000" shape-rendering="crispEdges"/>
<rect x="892.9" y="205.0" width="2" height="2" fill="#000" shape-rendering="crispEdges"/>
<rect x="904.0" y="173.8" width="2" height="2" fill="#000" shape-rendering="crispEdges"/>
<rect x="906.0" y="206.9" width="2" height="2" fill="#000" shape-rendering="crispEdges"/>
<rect x="909.0" y="169.0" width="2" height="2" fill="#000" shape-rendering="crispEdges"/>
<rect x="919.0" y="227.0" width="2" height="2" fill="#000" shape-rendering="crispEdges"/>
<rect x="921.8" y="150.0" width="2" height="2" fill="#000" shape-rendering="crispEdges"/>
<rect x="925.0" y="216.0" width="2" height="2" fill="#000" shape-rendering="crispEdges"/>
<rect x="929.9" y="197.9" width="2" height="2" fill="#000" shape-rendering="crispEdges"/>
<rect x="932.9" y="218.0" width="2" height="2" fill="#000" shape-rendering="crispEdges"/>
<rect x="938.0" y="209.9" width="2" height="2" fill="#000" shape-rendering="crispEdges"/>
<rect x="943.0" y="227.0" width="2" height="2" fill="#000" shape-rendering="crispEdges"/>
<rect x="947.9" y="220.8" width="2" height="2" fill="#000" shape-rendering="crispEdges"/>
<rect x="953.0" y="197.0" width="2" height="2" fill="#000" shape-rendering="crispEdges"/>
<rect x="959.0" y="183.8" width="2" height="2" fill="#000" shape-rendering="crispEdges"/>
<rect x="966.9" y="232.0" width="2" height="2" fill="#000" shape-rendering="crispEdges"/>
<rect x="975.0" y="232.0" width="2" height="2" fill="#000" shape-rendering="crispEdges"/>
<rect x="985.0" y="197.9" width="2" height="2" fill="#000" shape-rendering="crispEdges"/>
<rect x="988.0" y="191.9" width="2" height="2" fill="#000" shape-rendering="crispEdges"/>
<rect x="990.0" y="220.8" width="2" height="2" fill="#000" shape-rendering="crispEdges"/>
<rect x="993.0" y="194.9" width="2" height="2" fill="#000" shape-rendering="crispEdges"/>
<rect x="994.9" y="189.8" width="2" height="2" fill="#000" shape-rendering="crispEdges"/>
<rect x="997.9" y="218.0" width="2" height="2" fill="#000" shape-rendering="crispEdges"/>
<rect x="1003.0" y="170.8" width="2" height="2" fill="#000" shape-rendering="crispEdges"/>
<rect x="1006.0" y="181.9" width="2" height="2" fill="#000" shape-rendering="crispEdges"/>
<rect x="1009.0" y="173.8" width="2" height="2" fill="#000" shape-rendering="crispEdges"/>
<rect x="1011.0" y="153.0" width="2" height="2" fill="#000" shape-rendering="crispEdges"/>
<rect x="1013.9" y="175.9" width="2" height="2" fill="#000" shape-rendering="crispEdges"/>
<rect x="1017.0" y="202.0" width="2" height="2" fill="#000" shape-rendering="crispEdges"/>
<rect x="1019.0" y="180.8" width="2" height="2" fill="#000" shape-rendering="crispEdges"/>
<rect x="1022.0" y="197.0" width="2" height="2" fill="#000" shape-rendering="crispEdges"/>
<rect x="1023.8" y="163.0" width="2" height="2" fill="#000" shape-rendering="crispEdges"/>
<rect x="1027.0" y="153.0" width="2" height="2" fill="#000" shape-rendering="crispEdges"/>
<rect x="1031.9" y="160.9" width="2" height="2" fill="#000" shape-rendering="crispEdges"/>
<rect x="1037.0" y="166.0" width="2" height="2" fill="#000" shape-rendering="crispEdges"/>
<rect x="1040.0" y="169.0" width="2" height="2" fill="#000" shape-rendering="crispEdges"/>
<rect x="1043.0" y="200.0" width="2" height="2" fill="#000" shape-rendering="crispEdges"/>
<rect x="1045.3" y="200.0" width="2" height="2" fill="#000" shape-rendering="crispEdges"/>
<rect x="1048.0" y="200.0" width="2" height="2" fill="#000" shape-rendering="crispEdges"/>
<rect x="1050.9" y="197.0" width="2" height="2" fill="#000" shape-rendering="crispEdges"/>
<rect x="1053.0" y="178.9" width="2" height="2" fill="#000" shape-rendering="crispEdges"/>
<rect x="1056.0" y="155.0" width="2" height="2" fill="#000" shape-rendering="crispEdges"/>
<rect x="1059.0" y="228.9" width="2" height="2" fill="#000" shape-rendering="crispEdges"/>
<rect x="1064.0" y="208.0" width="2" height="2" fill="#000" shape-rendering="crispEdges"/>
<rect x="1065.9" y="176.8" width="2" height="2" fill="#000" shape-rendering="crispEdges"/>
<rect x="1068.9" y="183.8" width="2" height="2" fill="#000" shape-rendering="crispEdges"/>
<rect x="1071.9" y="226.0" width="2" height="2" fill="#000" shape-rendering="crispEdges"/>
<rect x="1073.8" y="159.9" width="2" height="2" fill="#000" shape-rendering="crispEdges"/>
<rect x="1076.8" y="170.8" width="2" height="2" fill="#000" shape-rendering="crispEdges"/>
<rect x="1078.9" y="197.9" width="2" height="2" fill="#000" shape-rendering="crispEdges"/>
<rect x="1090.0" y="218.0" width="2" height="2" fill="#000" shape-rendering="crispEdges"/>
<rect x="1097.9" y="183.8" width="2" height="2" fill="#000" shape-rendering="crispEdges"/>
<rect x="1107.8" y="163.0" width="2" height="2" fill="#000" shape-rendering="crispEdges"/>
<rect x="1113.8" y="226.0" width="2" height="2" fill="#000" shape-rendering="crispEdges"/>
<rect x="1118.9" y="189.8" width="2" height="2" fill="#000" shape-rendering="crispEdges"/>
<rect x="1121.0" y="224.0" width="2" height="2" fill="#000" shape-rendering="crispEdges"/>
<rect x="1124.0" y="186.8" width="2" height="2" fill="#000" shape-rendering="crispEdges"/>
<rect x="1127.0" y="180.8" width="2" height="2" fill="#000" shape-rendering="crispEdges"/>
<rect x="1128.9" y="200.0" width="2" height="2" fill="#000" shape-rendering="crispEdges"/>
<rect x="1131.9" y="197.9" width="2" height="2" fill="#000" shape-rendering="crispEdges"/>
<rect x="1134.9" y="188.9" width="2" height="2" fill="#000" shape-rendering="crispEdges"/>
<rect x="1136.9" y="197.0" width="2" height="2" fill="#000" shape-rendering="crispEdges"/>
<rect x="1139.9" y="220.8" width="2" height="2" fill="#000" shape-rendering="crispEdges"/>
<rect x="1143.0" y="226.0" width="2" height="2" fill="#000" shape-rendering="crispEdges"/>
<rect x="1145.0" y="212.9" width="2" height="2" fill="#000" shape-rendering="crispEdges"/>
<rect x="1148.0" y="211.0" width="2" height="2" fill="#000" shape-rendering="crispEdges"/>
<rect x="1149.9" y="188.9" width="2" height="2" fill="#000" shape-rendering="crispEdges"/>
<rect x="1152.9" y="176.8" width="2" height="2" fill="#000" shape-rendering="crispEdges"/>
<rect x="1155.9" y="176.8" width="2" height="2" fill="#000" shape-rendering="crispEdges"/>
<rect x="1160.8" y="224.0" width="2" height="2" fill="#000" shape-rendering="crispEdges"/>
<rect x="1162.9" y="203.0" width="2" height="2" fill="#000" shape-rendering="crispEdges"/>
<rect x="1165.9" y="205.0" width="2" height="2" fill="#000" shape-rendering="crispEdges"/>
<rect x="1168.9" y="215.0" width="2" height="2" fill="#000" shape-rendering="crispEdges"/>
<rect x="1170.9" y="173.8" width="2" height="2" fill="#000" shape-rendering="crispEdges"/>
<rect x="1174.0" y="194.0" width="2" height="2" fill="#000" shape-rendering="crispEdges"/>
<rect x="1177.0" y="181.9" width="2" height="2" fill="#000" shape-rendering="crispEdges"/>
<rect x="1178.8" y="212.9" width="2" height="2" fill="#000" shape-rendering="crispEdges"/>
<rect x="1001.0" y="244.0" width="2" height="2" fill="#000" shape-rendering="crispEdges"/>
<rect x="1035.0" y="235.0" width="2" height="2" fill="#000" shape-rendering="crispEdges"/>
<rect x="1030.0" y="258.0" width="2" height="2" fill="#000" shape-rendering="crispEdges"/>
<rect x="1061.0" y="247.9" width="2" height="2" fill="#000" shape-rendering="crispEdges"/>
<rect x="1082.0" y="246.9" width="2" height="2" fill="#000" shape-rendering="crispEdges"/>
<rect x="1084.5" y="246.9" width="2" height="2" fill="#000" shape-rendering="crispEdges"/>
<rect x="1087.0" y="246.9" width="2" height="2" fill="#000" shape-rendering="crispEdges"/>
<rect x="1093.0" y="256.0" width="2" height="2" fill="#000" shape-rendering="crispEdges"/>
<rect x="1095.0" y="258.0" width="2" height="2" fill="#000" shape-rendering="crispEdges"/>
<rect x="1101.0" y="253.0" width="2" height="2" fill="#000" shape-rendering="crispEdges"/>
<rect x="1102.9" y="296.9" width="2" height="2" fill="#000" shape-rendering="crispEdges"/>
<rect x="1106.0" y="247.9" width="2" height="2" fill="#000" shape-rendering="crispEdges"/>
<rect x="1157.9" y="247.9" width="2" height="2" fill="#000" shape-rendering="crispEdges"/>
<rect x="1186.9" y="240.0" width="2" height="2" fill="#000" shape-rendering="crispEdges"/>
<rect x="1189.9" y="226.8" width="2" height="2" fill="#000" shape-rendering="crispEdges"/>
<rect x="1199.8" y="242.0" width="2" height="2" fill="#000" shape-rendering="crispEdges"/>
<rect x="1204.9" y="231.0" width="2" height="2" fill="#000" shape-rendering="crispEdges"/>
<rect x="1207.9" y="258.0" width="2" height="2" fill="#000" shape-rendering="crispEdges"/>
<rect x="1210.9" y="249.9" width="2" height="2" fill="#000" shape-rendering="crispEdges"/>
<rect x="1212.8" y="256.0" width="2" height="2" fill="#000" shape-rendering="crispEdges"/>
<rect x="1216.0" y="234.0" width="2" height="2" fill="#000" shape-rendering="crispEdges"/>
<rect x="1229.0" y="226.0" width="2" height="2" fill="#000" shape-rendering="crispEdges"/>
<rect x="1232.0" y="234.9" width="2" height="2" fill="#000" shape-rendering="crispEdges"/>
<rect x="1236.8" y="255.0" width="2" height="2" fill="#000" shape-rendering="crispEdges"/>
<rect x="1244.9" y="255.0" width="2" height="2" fill="#000" shape-rendering="crispEdges"/>
<rect x="1263.0" y="265.0" width="2" height="2" fill="#000" shape-rendering="crispEdges"/>
<rect x="1279.0" y="226.8" width="2" height="2" fill="#000" shape-rendering="crispEdges"/>
<rect x="1182.0" y="191.8" width="2" height="2" fill="#000" shape-rendering="crispEdges"/>
<rect x="1185.0" y="202.9" width="2" height="2" fill="#000" shape-rendering="crispEdges"/>
<rect x="1187.0" y="239.9" width="2" height="2" fill="#000" shape-rendering="crispEdges"/>
<rect x="1190.0" y="227.0" width="2" height="2" fill="#000" shape-rendering="crispEdges"/>
<rect x="1192.0" y="212.9" width="2" height="2" fill="#000" shape-rendering="crispEdges"/>
<rect x="1195.0" y="212.9" width="2" height="2" fill="#000" shape-rendering="crispEdges"/>
<rect x="1198.0" y="181.9" width="2" height="2" fill="#000" shape-rendering="crispEdges"/>
<rect x="1200.0" y="242.0" width="2" height="2" fill="#000" shape-rendering="crispEdges"/>
<rect x="1203.0" y="199.9" width="2" height="2" fill="#000" shape-rendering="crispEdges"/>
<rect x="1205.0" y="231.0" width="2" height="2" fill="#000" shape-rendering="crispEdges"/>
<rect x="1216.0" y="233.9" width="2" height="2" fill="#000" shape-rendering="crispEdges"/>
<rect x="1219.0" y="211.0" width="2" height="2" fill="#000" shape-rendering="crispEdges"/>
<rect x="1221.0" y="160.9" width="2" height="2" fill="#000" shape-rendering="crispEdges"/>
<rect x="1224.0" y="187.0" width="2" height="2" fill="#000" shape-rendering="crispEdges"/>
<rect x="1227.0" y="187.0" width="2" height="2" fill="#000" shape-rendering="crispEdges"/>
<rect x="1229.0" y="226.0" width="2" height="2" fill="#000" shape-rendering="crispEdges"/>
<rect x="1232.0" y="234.9" width="2" height="2" fill="#000" shape-rendering="crispEdges"/>
<rect x="1240.0" y="209.9" width="2" height="2" fill="#000" shape-rendering="crispEdges"/>
<rect x="1242.0" y="128.9" width="2" height="2" fill="#000" shape-rendering="crispEdges"/>
<rect x="1246.9" y="165.9" width="2" height="2" fill="#000" shape-rendering="crispEdges"/>
<rect x="1249.9" y="215.9" width="2" height="2" fill="#000" shape-rendering="crispEdges"/>
<rect x="1252.9" y="196.9" width="2" height="2" fill="#000" shape-rendering="crispEdges"/>
<rect x="1255.0" y="177.0" width="2" height="2" fill="#000" shape-rendering="crispEdges"/>
<rect x="1258.0" y="184.0" width="2" height="2" fill="#000" shape-rendering="crispEdges"/>
<rect x="1261.0" y="173.0" width="2" height="2" fill="#000" shape-rendering="crispEdges"/>
<rect x="1268.9" y="221.0" width="2" height="2" fill="#000" shape-rendering="crispEdges"/>
<rect x="1271.0" y="201.8" width="2" height="2" fill="#000" shape-rendering="crispEdges"/>
<rect x="1274.0" y="143.9" width="2" height="2" fill="#000" shape-rendering="crispEdges"/>
<rect x="1276.0" y="218.0" width="2" height="2" fill="#000" shape-rendering="crispEdges"/>
<rect x="1278.9" y="227.0" width="2" height="2" fill="#000" shape-rendering="crispEdges"/>
<rect x="1282.0" y="211.0" width="2" height="2" fill="#000" shape-rendering="crispEdges"/>
<rect x="1284.5" y="210.0" width="2" height="2" fill="#000" shape-rendering="crispEdges"/>
<rect x="1287.0" y="210.0" width="2" height="2" fill="#000" shape-rendering="crispEdges"/>
<rect x="1289.0" y="197.9" width="2" height="2" fill="#000" shape-rendering="crispEdges"/>
<rect x="1292.0" y="206.9" width="2" height="2" fill="#000" shape-rendering="crispEdges"/>
<rect x="1295.0" y="190.0" width="2" height="2" fill="#000" shape-rendering="crispEdges"/>
<rect x="1297.0" y="204.8" width="2" height="2" fill="#000" shape-rendering="crispEdges"/>
<rect x="1299.9" y="224.0" width="2" height="2" fill="#000" shape-rendering="crispEdges"/>
<rect x="1302.9" y="218.0" width="2" height="2" fill="#000" shape-rendering="crispEdges"/>
<rect x="1305.0" y="219.0" width="2" height="2" fill="#000" shape-rendering="crispEdges"/>
<rect x="1308.0" y="168.0" width="2" height="2" fill="#000" shape-rendering="crispEdges"/>
<rect x="1311.0" y="221.0" width="2" height="2" fill="#000" shape-rendering="crispEdges"/>
<rect x="1313.0" y="206.9" width="2" height="2" fill="#000" shape-rendering="crispEdges"/>
<rect x="1316.0" y="184.0" width="2" height="2" fill="#000" shape-rendering="crispEdges"/>
<rect x="1317.9" y="211.0" width="2" height="2" fill="#000" shape-rendering="crispEdges"/>
<rect x="1320.9" y="224.0" width="2" height="2" fill="#000" shape-rendering="crispEdges"/>
<rect x="1323.9" y="197.9" width="2" height="2" fill="#000" shape-rendering="crispEdges"/>
<rect x="1325.8" y="221.0" width="2" height="2" fill="#000" shape-rendering="crispEdges"/>
<rect x="1329.0" y="209.9" width="2" height="2" fill="#000" shape-rendering="crispEdges"/>
<rect x="1330.9" y="242.0" width="2" height="2" fill="#000" shape-rendering="crispEdges"/>
<rect x="1333.9" y="206.9" width="2" height="2" fill="#000" shape-rendering="crispEdges"/>
<rect x="1336.9" y="208.0" width="2" height="2" fill="#000" shape-rendering="crispEdges"/>
<rect x="1339.0" y="168.9" width="2" height="2" fill="#000" shape-rendering="crispEdges"/>
<rect x="1342.0" y="177.0" width="2" height="2" fill="#000" shape-rendering="crispEdges"/>
<rect x="1345.0" y="181.0" width="2" height="2" fill="#000" shape-rendering="crispEdges"/>
<rect x="1346.9" y="193.9" width="2" height="2" fill="#000" shape-rendering="crispEdges"/>
<rect x="1349.9" y="224.0" width="2" height="2" fill="#000" shape-rendering="crispEdges"/>
<rect x="1352.9" y="216.0" width="2" height="2" fill="#000" shape-rendering="crispEdges"/>
<rect x="1355.0" y="215.0" width="2" height="2" fill="#000" shape-rendering="crispEdges"/>
<rect x="1358.0" y="218.0" width="2" height="2" fill="#000" shape-rendering="crispEdges"/>
<rect x="1359.8" y="228.9" width="2" height="2" fill="#000" shape-rendering="crispEdges"/>
<rect x="1362.8" y="187.0" width="2" height="2" fill="#000" shape-rendering="crispEdges"/>
<rect x="1365.8" y="190.0" width="2" height="2" fill="#000" shape-rendering="crispEdges"/>
<rect x="1367.9" y="199.9" width="2" height="2" fill="#000" shape-rendering="crispEdges"/>
<rect x="1370.9" y="202.9" width="2" height="2" fill="#000" shape-rendering="crispEdges"/>
<rect x="1372.8" y="202.9" width="2" height="2" fill="#000" shape-rendering="crispEdges"/>
<rect x="1380.9" y="202.9" width="2" height="2" fill="#000" shape-rendering="crispEdges"/>
<rect x="1383.6" y="202.9" width="2" height="2" fill="#000" shape-rendering="crispEdges"/>
<rect x="1386.3" y="202.9" width="2" height="2" fill="#000" shape-rendering="crispEdges"/>
<rect x="1389.0" y="202.9" width="2" height="2" fill="#000" shape-rendering="crispEdges"/>
<rect x="1391.7" y="202.9" width="2" height="2" fill="#000" shape-rendering="crispEdges"/>
<rect x="1394.4" y="202.9" width="2" height="2" fill="#000" shape-rendering="crispEdges"/>
<rect x="1397.1" y="202.9" width="2" height="2" fill="#000" shape-rendering="crispEdges"/>
<rect x="1399.8" y="202.9" width="2" height="2" fill="#000" shape-rendering="crispEdges"/>
<rect x="1402.5" y="202.9" width="2" height="2" fill="#000" shape-rendering="crispEdges"/>
<rect x="1405.2" y="202.9" width="2" height="2" fill="#000" shape-rendering="crispEdges"/>
<rect x="1407.9" y="202.9" width="2" height="2" fill="#000" shape-rendering="crispEdges"/>
<rect x="1410.6" y="202.9" width="2" height="2" fill="#000" shape-rendering="crispEdges"/>
<rect x="1413.0" y="208.0" width="2" height="2" fill="#000" shape-rendering="crispEdges"/>
<rect x="1414.9" y="218.0" width="2" height="2" fill="#000" shape-rendering="crispEdges"/>
<rect x="1417.9" y="227.0" width="2" height="2" fill="#000" shape-rendering="crispEdges"/>
<rect x="1420.9" y="243.9" width="2" height="2" fill="#000" shape-rendering="crispEdges"/>
<rect x="1423.0" y="242.0" width="2" height="2" fill="#000" shape-rendering="crispEdges"/>
<rect x="1425.8" y="239.9" width="2" height="2" fill="#000" shape-rendering="crispEdges"/>
<rect x="1428.4" y="239.9" width="2" height="2" fill="#000" shape-rendering="crispEdges"/>
<rect x="1431.0" y="239.9" width="2" height="2" fill="#000" shape-rendering="crispEdges"/>
<rect x="1433.6" y="239.9" width="2" height="2" fill="#000" shape-rendering="crispEdges"/>
<rect x="1438.9" y="239.0" width="2" height="2" fill="#000" shape-rendering="crispEdges"/>
<rect x="1442.0" y="239.9" width="2" height="2" fill="#000" shape-rendering="crispEdges"/>
<polyline class="ln" points="609.0,626.8 660.5,626.4 661.2,625.0 712.0,625.0 712.8,621.9 767.4,621.9 768.1,617.6 819.6,617.6 820.4,610.4 869.7,610.0 870.5,594.7 924.5,594.7 925.3,582.0 977.4,582.0 978.2,566.0 1030.0,566.0 1030.8,553.0 1081.2,553.0 1082.1,541.0 1134.5,541.0 1135.3,532.0 1187.3,532.0 1188.2,527.6 1240.2,527.6 1241.0,525.0 1292.1,525.0 1292.9,523.0 1345.1,523.0 1345.9,522.0 1445.7,522.0" stroke="#800080" stroke-width="2" />
<line x1="188.0" y1="627.5" x2="1446.0" y2="627.5" stroke="#0499ff" stroke-width="1" shape-rendering="crispEdges"/>
<line x1="184" y1="316.5" x2="1446.0" y2="316.5" stroke="#ff0000" stroke-width="1" stroke-dasharray="18 6" shape-rendering="crispEdges"/>
<polyline class="ln" points="188.0,329.0 213.0,329.5 240.0,329.0 270.0,328.0 277.0,327.0 290.0,327.0 300.0,328.5 340.0,329.5 365.0,330.0 375.0,329.0 400.0,329.0 420.0,328.5 440.0,330.0 470.0,329.5 500.0,329.0 570.0,328.5 580.0,327.0 590.0,327.5 620.0,326.0 660.0,323.0 700.0,321.0 750.0,319.5 806.0,319.0 808.0,318.0 811.0,319.5 860.0,320.0 870.0,321.0 880.0,320.0 900.0,320.5 1000.0,320.5 1008.0,319.0 1015.0,320.0 1020.0,320.5 1055.0,319.5 1120.0,319.3 1130.0,318.0 1145.0,318.5 1150.0,317.8 1160.0,318.5 1195.0,318.0 1203.0,319.5 1215.0,318.0 1235.0,317.5 1290.0,318.0 1297.0,315.5 1310.0,314.0 1320.0,312.0 1335.0,310.5 1345.0,311.5 1360.0,309.5 1380.0,310.0 1390.0,311.5 1400.0,311.5 1415.0,310.0 1430.0,309.0 1445.0,309.5" stroke="#00aa00" stroke-width="2" />
<polyline class="ln" points="188.0,99.0 240.0,99.0 243.5,92.0 248.0,92.0 250.5,99.0 253.5,92.5 256.0,99.0 262.5,99.0 265.5,92.0 609.5,92.0 612.0,84.5 616.0,84.5 618.0,92.0 674.0,92.0 676.0,99.0 689.0,99.0 691.0,105.0 694.0,106.0 696.0,112.0 699.0,113.0 702.0,120.0 710.5,120.0 713.0,135.0 721.0,135.0 724.0,141.0 727.0,142.0 729.0,148.0 733.0,150.0 735.0,157.0 740.0,157.0 742.0,164.0 752.0,164.0 755.0,157.5 758.0,164.0 760.5,164.0 763.0,157.5 767.0,175.0 771.0,185.0 776.0,192.0 781.0,193.0 784.0,200.0 789.0,187.0 792.0,200.0 796.5,194.0 799.0,197.0 802.0,208.0 806.0,200.0 811.0,199.0 813.0,194.0 816.0,200.0 818.0,201.0 823.5,214.0 827.0,215.0 828.5,222.0 832.0,222.0 834.0,216.0 835.0,218.0 838.7,251.0 843.0,244.6 845.0,241.0 847.0,229.0 850.5,243.8 855.5,216.0 856.4,236.0 860.0,236.0 863.0,243.8 865.0,229.0 871.0,244.0 874.0,236.0 876.0,236.0 879.0,251.0 882.0,251.0 889.0,236.0 892.0,243.8 898.6,243.8 905.0,258.0 908.0,258.0 910.0,237.0 912.0,251.0 914.7,251.0 919.0,258.0 923.0,258.0 926.5,265.7 929.0,258.0 936.6,258.0 941.7,272.5 945.0,265.7 949.0,265.7 952.7,258.0 957.0,257.0 962.0,243.8 965.0,243.8 968.0,272.5 971.0,258.0 978.0,258.0 981.0,265.7 983.6,237.0 986.5,251.0 989.0,258.0 991.5,265.7 995.0,265.7 997.5,251.0 999.0,251.0 1001.7,265.7 1004.0,245.4 1006.8,251.0 1010.0,245.4 1015.0,265.7 1020.0,265.7 1026.0,266.0 1031.0,279.6 1032.7,259.3 1034.4,260.0 1037.7,280.4 1041.0,301.5 1043.6,295.6 1046.0,294.0 1048.7,281.0 1053.0,287.0 1057.0,294.0 1064.8,274.5 1070.7,267.0 1073.0,273.6 1075.4,286.0 1078.0,267.0 1080.8,264.0 1083.0,258.5 1087.6,257.8 1091.8,251.0 1097.0,251.0 1099.4,244.6 1102.4,243.8 1104.5,229.4 1107.8,236.0 1112.0,243.8 1115.4,244.0 1117.0,251.0 1119.7,244.6 1124.7,258.0 1129.0,251.0 1133.0,243.8 1136.5,243.8 1138.0,251.0 1142.5,243.8 1146.7,243.5 1150.0,236.5 1154.0,236.0 1157.7,229.0 1162.7,228.5 1164.4,222.3 1167.0,222.0 1169.5,228.5 1178.0,228.5 1180.0,222.6 1183.0,229.0 1187.0,221.8 1196.5,221.8 1200.0,215.0 1204.0,215.0 1205.8,221.8 1212.6,221.8 1214.0,215.0 1216.8,221.8 1221.0,215.0 1226.0,214.5 1228.6,208.3 1232.8,207.8 1235.0,200.7 1241.0,215.0 1243.0,208.8 1248.0,207.8 1251.4,200.3 1264.0,199.8 1268.0,193.6 1272.5,193.0 1276.0,185.8 1286.0,185.8 1288.5,178.0 1301.0,178.0 1304.5,171.0 1361.0,171.0 1364.5,164.0 1382.0,164.0 1385.0,157.5 1388.0,157.0 1390.0,150.0 1393.5,150.0 1395.5,143.0 1399.0,142.0 1402.0,135.0 1409.5,135.0 1411.5,128.0 1419.5,128.0 1422.5,120.0 1440.0,120.0 1443.0,127.5 1445.5,128.0" stroke="#0000ff" stroke-width="2" />
<polyline class="ln" points="188.0,325.0 200.0,326.0 210.0,328.0 225.0,331.0 240.0,334.0 255.0,336.0 270.0,338.0 285.0,340.0 300.0,343.0 315.0,345.0 330.0,347.0 345.0,348.0 360.0,349.0 365.0,350.0 375.0,348.0 400.0,347.0 410.0,343.0 420.0,340.5 430.0,333.0 450.0,331.5 470.0,326.5 500.0,321.5 520.0,317.5 535.0,314.0 545.0,311.0 557.0,309.0 560.0,311.0 575.0,307.0 590.0,303.5 600.0,300.0 607.0,295.0 613.0,289.0 618.0,288.0 625.0,288.5 632.0,287.0 638.0,288.5 645.0,288.5 650.0,285.5 665.0,284.0 685.0,282.5 700.0,278.5 710.0,274.0 720.0,270.0 730.0,267.0 745.0,261.5 750.0,260.6 758.4,254.7 766.0,250.5 770.0,246.3 775.0,247.0 785.5,247.6 789.7,245.4 800.7,245.4 803.0,246.6 808.0,245.4 813.0,242.6 818.4,241.7 822.6,237.0 827.0,227.0 836.0,226.4 842.0,228.5 844.6,228.5 849.7,223.5 854.7,222.6 858.0,221.3 860.6,222.3 863.0,226.0 867.4,220.0 870.0,220.6 872.5,223.0 877.5,223.0 881.0,225.0 885.0,232.0 888.5,235.3 892.0,235.8 895.0,227.7 898.6,220.0 903.0,216.4 908.8,215.9 912.0,218.0 915.5,216.0 919.8,216.0 925.7,220.6 929.0,220.0 931.6,221.0 934.0,220.6 936.6,217.6 940.0,218.4 944.0,219.0 948.5,216.0 952.0,220.6 956.0,219.6 960.0,218.4 965.0,213.3 968.0,213.3 973.0,215.5 984.0,215.9 988.0,220.0 991.5,225.0 995.0,226.9 1001.7,228.0 1005.0,232.0 1010.0,233.6 1016.0,238.0 1020.0,238.7 1025.0,233.0 1031.0,233.6 1035.0,230.0 1038.6,230.7 1048.0,226.9 1053.0,229.0 1056.0,229.4 1060.5,231.4 1070.7,232.4 1075.0,234.5 1079.0,238.7 1082.5,238.7 1087.6,236.0 1091.8,236.5 1095.0,239.5 1098.5,244.6 1102.0,247.6 1106.0,248.0 1109.5,249.7 1113.7,247.6 1119.7,247.6 1122.0,246.0 1125.6,248.3 1130.0,251.7 1135.7,252.0 1140.0,256.4 1144.0,257.3 1146.7,260.0 1155.0,261.0 1159.0,262.8 1167.0,263.5 1197.0,263.5 1201.6,262.8 1212.6,263.0 1222.0,264.5 1226.0,266.5 1230.0,266.5 1235.0,265.0 1244.7,267.0 1250.6,270.8 1255.6,274.0 1265.0,277.0 1275.0,280.5 1285.0,284.0 1292.0,286.0 1300.0,288.0 1310.0,288.5 1320.0,286.0 1330.0,285.5 1345.0,286.0 1350.0,284.0 1355.0,286.0 1365.0,284.0 1370.0,284.5 1380.0,286.0 1385.0,289.0 1395.0,295.0 1405.0,299.0 1415.0,300.5 1420.0,302.5 1428.0,304.5 1437.0,305.5 1445.0,302.5" stroke="#ff0000" stroke-width="2.2" />
<line x1="187.5" y1="48" x2="1448" y2="48" stroke="#808080" stroke-width="2" shape-rendering="crispEdges"/>
<line x1="188.0" y1="47" x2="188.0" y2="629" stroke="#808080" stroke-width="2" shape-rendering="crispEdges"/>
<line x1="1446.5" y1="47" x2="1446.5" y2="629" stroke="#808080" stroke-width="1" shape-rendering="crispEdges"/>
<line x1="1448.5" y1="47" x2="1448.5" y2="629" stroke="#808080" stroke-width="1" shape-rendering="crispEdges"/>
<line x1="188.0" y1="628.5" x2="1449" y2="628.5" stroke="#808080" stroke-width="1" shape-rendering="crispEdges"/>
<line x1="188.5" y1="629" x2="188.5" y2="634" stroke="#808080" stroke-width="1" shape-rendering="crispEdges"/>
<text transform="translate(188.8 647.0) scale(0.9 1)" class="m" fill="#000">00:00</text>
<line x1="240.5" y1="629" x2="240.5" y2="634" stroke="#808080" stroke-width="1" shape-rendering="crispEdges"/>
<text transform="translate(240.8 647.0) scale(0.9 1)" class="m" fill="#000">01:00</text>
<line x1="293.5" y1="629" x2="293.5" y2="634" stroke="#808080" stroke-width="1" shape-rendering="crispEdges"/>
<text transform="translate(293.8 647.0) scale(0.9 1)" class="m" fill="#000">02:00</text>
<line x1="346.5" y1="629" x2="346.5" y2="634" stroke="#808080" stroke-width="1" shape-rendering="crispEdges"/>
<text transform="translate(346.8 647.0) scale(0.9 1)" class="m" fill="#000">03:00</text>
<line x1="398.5" y1="629" x2="398.5" y2="634" stroke="#808080" stroke-width="1" shape-rendering="crispEdges"/>
<text transform="translate(398.8 647.0) scale(0.9 1)" class="m" fill="#000">04:00</text>
<line x1="450.5" y1="629" x2="450.5" y2="634" stroke="#808080" stroke-width="1" shape-rendering="crispEdges"/>
<text transform="translate(450.8 647.0) scale(0.9 1)" class="m" fill="#000">05:00</text>
<line x1="503.5" y1="629" x2="503.5" y2="634" stroke="#808080" stroke-width="1" shape-rendering="crispEdges"/>
<text transform="translate(503.8 647.0) scale(0.9 1)" class="m" fill="#000">06:00</text>
<line x1="556.5" y1="629" x2="556.5" y2="634" stroke="#808080" stroke-width="1" shape-rendering="crispEdges"/>
<text transform="translate(556.8 647.0) scale(0.9 1)" class="m" fill="#000">07:00</text>
<line x1="608.5" y1="629" x2="608.5" y2="634" stroke="#808080" stroke-width="1" shape-rendering="crispEdges"/>
<text transform="translate(608.8 647.0) scale(0.9 1)" class="m" fill="#000">08:00</text>
<line x1="660.5" y1="629" x2="660.5" y2="634" stroke="#808080" stroke-width="1" shape-rendering="crispEdges"/>
<text transform="translate(660.8 647.0) scale(0.9 1)" class="m" fill="#000">09:00</text>
<line x1="713.5" y1="629" x2="713.5" y2="634" stroke="#808080" stroke-width="1" shape-rendering="crispEdges"/>
<text transform="translate(713.8 647.0) scale(0.9 1)" class="m" fill="#000">10:00</text>
<line x1="766.5" y1="629" x2="766.5" y2="634" stroke="#808080" stroke-width="1" shape-rendering="crispEdges"/>
<text transform="translate(766.8 647.0) scale(0.9 1)" class="m" fill="#000">11:00</text>
<line x1="818.5" y1="629" x2="818.5" y2="634" stroke="#808080" stroke-width="1" shape-rendering="crispEdges"/>
<text transform="translate(818.8 647.0) scale(0.9 1)" class="m" fill="#000">12:00</text>
<line x1="870.5" y1="629" x2="870.5" y2="634" stroke="#808080" stroke-width="1" shape-rendering="crispEdges"/>
<text transform="translate(870.8 647.0) scale(0.9 1)" class="m" fill="#000">13:00</text>
<line x1="923.5" y1="629" x2="923.5" y2="634" stroke="#808080" stroke-width="1" shape-rendering="crispEdges"/>
<text transform="translate(923.8 647.0) scale(0.9 1)" class="m" fill="#000">14:00</text>
<line x1="976.5" y1="629" x2="976.5" y2="634" stroke="#808080" stroke-width="1" shape-rendering="crispEdges"/>
<text transform="translate(976.8 647.0) scale(0.9 1)" class="m" fill="#000">15:00</text>
<line x1="1028.5" y1="629" x2="1028.5" y2="634" stroke="#808080" stroke-width="1" shape-rendering="crispEdges"/>
<text transform="translate(1028.8 647.0) scale(0.9 1)" class="m" fill="#000">16:00</text>
<line x1="1080.5" y1="629" x2="1080.5" y2="634" stroke="#808080" stroke-width="1" shape-rendering="crispEdges"/>
<text transform="translate(1080.8 647.0) scale(0.9 1)" class="m" fill="#000">17:00</text>
<line x1="1133.5" y1="629" x2="1133.5" y2="634" stroke="#808080" stroke-width="1" shape-rendering="crispEdges"/>
<text transform="translate(1133.8 647.0) scale(0.9 1)" class="m" fill="#000">18:00</text>
<line x1="1186.5" y1="629" x2="1186.5" y2="634" stroke="#808080" stroke-width="1" shape-rendering="crispEdges"/>
<text transform="translate(1186.8 647.0) scale(0.9 1)" class="m" fill="#000">19:00</text>
<line x1="1238.5" y1="629" x2="1238.5" y2="634" stroke="#808080" stroke-width="1" shape-rendering="crispEdges"/>
<text transform="translate(1238.8 647.0) scale(0.9 1)" class="m" fill="#000">20:00</text>
<line x1="1290.5" y1="629" x2="1290.5" y2="634" stroke="#808080" stroke-width="1" shape-rendering="crispEdges"/>
<text transform="translate(1290.8 647.0) scale(0.9 1)" class="m" fill="#000">21:00</text>
<line x1="1343.5" y1="629" x2="1343.5" y2="634" stroke="#808080" stroke-width="1" shape-rendering="crispEdges"/>
<text transform="translate(1343.8 647.0) scale(0.9 1)" class="m" fill="#000">22:00</text>
<line x1="1396.5" y1="629" x2="1396.5" y2="634" stroke="#808080" stroke-width="1" shape-rendering="crispEdges"/>
<text transform="translate(1396.8 647.0) scale(0.9 1)" class="m" fill="#000">23:00</text>
<line x1="1448.5" y1="629" x2="1448.5" y2="634" stroke="#808080" stroke-width="1" shape-rendering="crispEdges"/>
<text transform="translate(1448.8 647.0) scale(0.9 1)" class="m" fill="#000">24:00</text>
<line x1="40.5" y1="48" x2="40.5" y2="628" stroke="#808080" stroke-width="1" shape-rendering="crispEdges"/>
<line x1="35.5" y1="48.5" x2="44.0" y2="48.5" stroke="#808080" stroke-width="1" shape-rendering="crispEdges"/>
<text transform="translate(34.0 53.0) scale(0.9 1)" class="e" fill="#ff0000">35.0</text>
<line x1="35.5" y1="120.5" x2="40.5" y2="120.5" stroke="#808080" stroke-width="1" shape-rendering="crispEdges"/>
<text transform="translate(34.0 125.0) scale(0.9 1)" class="e" fill="#ff0000">30.0</text>
<line x1="35.5" y1="193.5" x2="40.5" y2="193.5" stroke="#808080" stroke-width="1" shape-rendering="crispEdges"/>
<text transform="translate(34.0 198.0) scale(0.9 1)" class="e" fill="#ff0000">25.0</text>
<line x1="35.5" y1="266.5" x2="40.5" y2="266.5" stroke="#808080" stroke-width="1" shape-rendering="crispEdges"/>
<text transform="translate(34.0 271.0) scale(0.9 1)" class="e" fill="#ff0000">20.0</text>
<line x1="35.5" y1="338.5" x2="40.5" y2="338.5" stroke="#808080" stroke-width="1" shape-rendering="crispEdges"/>
<text transform="translate(34.0 343.0) scale(0.9 1)" class="e" fill="#ff0000">15.0</text>
<line x1="35.5" y1="410.5" x2="40.5" y2="410.5" stroke="#808080" stroke-width="1" shape-rendering="crispEdges"/>
<text transform="translate(34.0 415.0) scale(0.9 1)" class="e" fill="#ff0000">10.0</text>
<line x1="35.5" y1="483.5" x2="40.5" y2="483.5" stroke="#808080" stroke-width="1" shape-rendering="crispEdges"/>
<text transform="translate(34.0 488.0) scale(0.9 1)" class="e" fill="#ff0000">5.0</text>
<line x1="35.5" y1="556.5" x2="40.5" y2="556.5" stroke="#808080" stroke-width="1" shape-rendering="crispEdges"/>
<text transform="translate(34.0 561.0) scale(0.9 1)" class="e" fill="#ff0000">0.0</text>
<line x1="35.5" y1="628.5" x2="44.0" y2="628.5" stroke="#808080" stroke-width="1" shape-rendering="crispEdges"/>
<text transform="translate(34.0 633.0) scale(0.9 1)" class="e" fill="#ff0000">-5.0</text>
<text transform="translate(25.0 37.0) scale(0.9 1)" class="m" fill="#ff0000">°C</text>
<line x1="77.5" y1="48" x2="77.5" y2="628" stroke="#808080" stroke-width="1" shape-rendering="crispEdges"/>
<line x1="72.5" y1="48.5" x2="81.0" y2="48.5" stroke="#808080" stroke-width="1" shape-rendering="crispEdges"/>
<text transform="translate(71.0 53.0) scale(0.9 1)" class="e" fill="#00aa00">1050</text>
<line x1="72.5" y1="120.5" x2="77.5" y2="120.5" stroke="#808080" stroke-width="1" shape-rendering="crispEdges"/>
<text transform="translate(71.0 125.0) scale(0.9 1)" class="e" fill="#00aa00">1040</text>
<line x1="72.5" y1="193.5" x2="77.5" y2="193.5" stroke="#808080" stroke-width="1" shape-rendering="crispEdges"/>
<text transform="translate(71.0 198.0) scale(0.9 1)" class="e" fill="#00aa00">1030</text>
<line x1="72.5" y1="266.5" x2="77.5" y2="266.5" stroke="#808080" stroke-width="1" shape-rendering="crispEdges"/>
<text transform="translate(71.0 271.0) scale(0.9 1)" class="e" fill="#00aa00">1020</text>
<line x1="72.5" y1="338.5" x2="77.5" y2="338.5" stroke="#808080" stroke-width="1" shape-rendering="crispEdges"/>
<text transform="translate(71.0 343.0) scale(0.9 1)" class="e" fill="#00aa00">1010</text>
<line x1="72.5" y1="410.5" x2="77.5" y2="410.5" stroke="#808080" stroke-width="1" shape-rendering="crispEdges"/>
<text transform="translate(71.0 415.0) scale(0.9 1)" class="e" fill="#00aa00">1000</text>
<line x1="72.5" y1="483.5" x2="77.5" y2="483.5" stroke="#808080" stroke-width="1" shape-rendering="crispEdges"/>
<text transform="translate(71.0 488.0) scale(0.9 1)" class="e" fill="#00aa00">990</text>
<line x1="72.5" y1="556.5" x2="77.5" y2="556.5" stroke="#808080" stroke-width="1" shape-rendering="crispEdges"/>
<text transform="translate(71.0 561.0) scale(0.9 1)" class="e" fill="#00aa00">980</text>
<line x1="72.5" y1="628.5" x2="81.0" y2="628.5" stroke="#808080" stroke-width="1" shape-rendering="crispEdges"/>
<text transform="translate(71.0 633.0) scale(0.9 1)" class="e" fill="#00aa00">970</text>
<text transform="translate(57.5 37.0) scale(0.9 1)" class="m" fill="#00aa00">hPa</text>
<line x1="114.5" y1="48" x2="114.5" y2="628" stroke="#808080" stroke-width="1" shape-rendering="crispEdges"/>
<line x1="109.5" y1="48.5" x2="118.0" y2="48.5" stroke="#808080" stroke-width="1" shape-rendering="crispEdges"/>
<text transform="translate(108.0 53.0) scale(0.9 1)" class="e" fill="#000">120.0</text>
<line x1="109.5" y1="96.5" x2="114.5" y2="96.5" stroke="#808080" stroke-width="1" shape-rendering="crispEdges"/>
<text transform="translate(108.0 101.0) scale(0.9 1)" class="e" fill="#000">110.0</text>
<line x1="109.5" y1="145.5" x2="114.5" y2="145.5" stroke="#808080" stroke-width="1" shape-rendering="crispEdges"/>
<text transform="translate(108.0 150.0) scale(0.9 1)" class="e" fill="#000">100.0</text>
<line x1="109.5" y1="193.5" x2="114.5" y2="193.5" stroke="#808080" stroke-width="1" shape-rendering="crispEdges"/>
<text transform="translate(108.0 198.0) scale(0.9 1)" class="e" fill="#000">90.0</text>
<line x1="109.5" y1="241.5" x2="114.5" y2="241.5" stroke="#808080" stroke-width="1" shape-rendering="crispEdges"/>
<text transform="translate(108.0 246.0) scale(0.9 1)" class="e" fill="#000">80.0</text>
<line x1="109.5" y1="290.5" x2="114.5" y2="290.5" stroke="#808080" stroke-width="1" shape-rendering="crispEdges"/>
<text transform="translate(108.0 295.0) scale(0.9 1)" class="e" fill="#000">70.0</text>
<line x1="109.5" y1="338.5" x2="114.5" y2="338.5" stroke="#808080" stroke-width="1" shape-rendering="crispEdges"/>
<text transform="translate(108.0 343.0) scale(0.9 1)" class="e" fill="#000">60.0</text>
<line x1="109.5" y1="386.5" x2="114.5" y2="386.5" stroke="#808080" stroke-width="1" shape-rendering="crispEdges"/>
<text transform="translate(108.0 391.0) scale(0.9 1)" class="e" fill="#000">50.0</text>
<line x1="109.5" y1="435.5" x2="114.5" y2="435.5" stroke="#808080" stroke-width="1" shape-rendering="crispEdges"/>
<text transform="translate(108.0 440.0) scale(0.9 1)" class="e" fill="#000">40.0</text>
<line x1="109.5" y1="483.5" x2="114.5" y2="483.5" stroke="#808080" stroke-width="1" shape-rendering="crispEdges"/>
<text transform="translate(108.0 488.0) scale(0.9 1)" class="e" fill="#000">30.0</text>
<line x1="109.5" y1="531.5" x2="114.5" y2="531.5" stroke="#808080" stroke-width="1" shape-rendering="crispEdges"/>
<text transform="translate(108.0 536.0) scale(0.9 1)" class="e" fill="#000">20.0</text>
<line x1="109.5" y1="580.5" x2="114.5" y2="580.5" stroke="#808080" stroke-width="1" shape-rendering="crispEdges"/>
<text transform="translate(108.0 585.0) scale(0.9 1)" class="e" fill="#000">10.0</text>
<line x1="109.5" y1="628.5" x2="118.0" y2="628.5" stroke="#808080" stroke-width="1" shape-rendering="crispEdges"/>
<text transform="translate(108.0 633.0) scale(0.9 1)" class="e" fill="#000">0.0</text>
<text transform="translate(91.5 37.0) scale(0.9 1)" class="m" fill="#000">km/h</text>
<line x1="151.5" y1="48" x2="151.5" y2="628" stroke="#808080" stroke-width="1" shape-rendering="crispEdges"/>
<line x1="146.5" y1="48.5" x2="155.0" y2="48.5" stroke="#808080" stroke-width="1" shape-rendering="crispEdges"/>
<text transform="translate(145.0 53.0) scale(0.9 1)" class="e" fill="#ffc000">30</text>
<line x1="146.5" y1="145.5" x2="151.5" y2="145.5" stroke="#808080" stroke-width="1" shape-rendering="crispEdges"/>
<text transform="translate(145.0 150.0) scale(0.9 1)" class="e" fill="#ffc000">25</text>
<line x1="146.5" y1="241.5" x2="151.5" y2="241.5" stroke="#808080" stroke-width="1" shape-rendering="crispEdges"/>
<text transform="translate(145.0 246.0) scale(0.9 1)" class="e" fill="#ffc000">20</text>
<line x1="146.5" y1="338.5" x2="151.5" y2="338.5" stroke="#808080" stroke-width="1" shape-rendering="crispEdges"/>
<text transform="translate(145.0 343.0) scale(0.9 1)" class="e" fill="#ffc000">15</text>
<line x1="146.5" y1="435.5" x2="151.5" y2="435.5" stroke="#808080" stroke-width="1" shape-rendering="crispEdges"/>
<text transform="translate(145.0 440.0) scale(0.9 1)" class="e" fill="#ffc000">10</text>
<line x1="146.5" y1="531.5" x2="151.5" y2="531.5" stroke="#808080" stroke-width="1" shape-rendering="crispEdges"/>
<text transform="translate(145.0 536.0) scale(0.9 1)" class="e" fill="#ffc000">5</text>
<line x1="146.5" y1="628.5" x2="155.0" y2="628.5" stroke="#808080" stroke-width="1" shape-rendering="crispEdges"/>
<text transform="translate(145.0 633.0) scale(0.9 1)" class="e" fill="#ffc000">0</text>
<text transform="translate(133.5 37.0) scale(0.9 1)" class="m" fill="#ffc000">min</text>
<line x1="183" y1="48.5" x2="188" y2="48.5" stroke="#808080" stroke-width="1" shape-rendering="crispEdges"/>
<text transform="translate(182.0 53.0) scale(0.9 1)" class="e" fill="#ff8000">1200</text>
<line x1="183" y1="120.5" x2="188" y2="120.5" stroke="#808080" stroke-width="1" shape-rendering="crispEdges"/>
<text transform="translate(182.0 125.0) scale(0.9 1)" class="e" fill="#ff8000">1050</text>
<line x1="183" y1="193.5" x2="188" y2="193.5" stroke="#808080" stroke-width="1" shape-rendering="crispEdges"/>
<text transform="translate(182.0 198.0) scale(0.9 1)" class="e" fill="#ff8000">900</text>
<line x1="183" y1="266.5" x2="188" y2="266.5" stroke="#808080" stroke-width="1" shape-rendering="crispEdges"/>
<text transform="translate(182.0 271.0) scale(0.9 1)" class="e" fill="#ff8000">750</text>
<line x1="183" y1="338.5" x2="188" y2="338.5" stroke="#808080" stroke-width="1" shape-rendering="crispEdges"/>
<text transform="translate(182.0 343.0) scale(0.9 1)" class="e" fill="#ff8000">600</text>
<line x1="183" y1="410.5" x2="188" y2="410.5" stroke="#808080" stroke-width="1" shape-rendering="crispEdges"/>
<text transform="translate(182.0 415.0) scale(0.9 1)" class="e" fill="#ff8000">450</text>
<line x1="183" y1="483.5" x2="188" y2="483.5" stroke="#808080" stroke-width="1" shape-rendering="crispEdges"/>
<text transform="translate(182.0 488.0) scale(0.9 1)" class="e" fill="#ff8000">300</text>
<line x1="183" y1="556.5" x2="188" y2="556.5" stroke="#808080" stroke-width="1" shape-rendering="crispEdges"/>
<text transform="translate(182.0 561.0) scale(0.9 1)" class="e" fill="#ff8000">150</text>
<line x1="183" y1="628.5" x2="188" y2="628.5" stroke="#808080" stroke-width="1" shape-rendering="crispEdges"/>
<text transform="translate(182.0 633.0) scale(0.9 1)" class="e" fill="#ff8000">0</text>
<text transform="translate(164.5 37.0) scale(0.9 1)" class="m" fill="#ff8000">W/m²</text>
<line x1="1448.5" y1="48.5" x2="1453.0" y2="48.5" stroke="#808080" stroke-width="1" shape-rendering="crispEdges"/>
<text transform="translate(1454.5 53.0) scale(0.9 1)" fill="#0000ff">100</text>
<line x1="1448.5" y1="120.5" x2="1453.0" y2="120.5" stroke="#808080" stroke-width="1" shape-rendering="crispEdges"/>
<text transform="translate(1454.5 125.0) scale(0.9 1)" fill="#0000ff">90</text>
<line x1="1448.5" y1="193.5" x2="1453.0" y2="193.5" stroke="#808080" stroke-width="1" shape-rendering="crispEdges"/>
<text transform="translate(1454.5 198.0) scale(0.9 1)" fill="#0000ff">80</text>
<line x1="1448.5" y1="266.5" x2="1453.0" y2="266.5" stroke="#808080" stroke-width="1" shape-rendering="crispEdges"/>
<text transform="translate(1454.5 271.0) scale(0.9 1)" fill="#0000ff">70</text>
<line x1="1448.5" y1="338.5" x2="1453.0" y2="338.5" stroke="#808080" stroke-width="1" shape-rendering="crispEdges"/>
<text transform="translate(1454.5 343.0) scale(0.9 1)" fill="#0000ff">60</text>
<line x1="1448.5" y1="410.5" x2="1453.0" y2="410.5" stroke="#808080" stroke-width="1" shape-rendering="crispEdges"/>
<text transform="translate(1454.5 415.0) scale(0.9 1)" fill="#0000ff">50</text>
<line x1="1448.5" y1="483.5" x2="1453.0" y2="483.5" stroke="#808080" stroke-width="1" shape-rendering="crispEdges"/>
<text transform="translate(1454.5 488.0) scale(0.9 1)" fill="#0000ff">40</text>
<line x1="1448.5" y1="556.5" x2="1453.0" y2="556.5" stroke="#808080" stroke-width="1" shape-rendering="crispEdges"/>
<text transform="translate(1454.5 561.0) scale(0.9 1)" fill="#0000ff">30</text>
<line x1="1448.5" y1="628.5" x2="1453.0" y2="628.5" stroke="#808080" stroke-width="1" shape-rendering="crispEdges"/>
<text transform="translate(1454.5 633.0) scale(0.9 1)" fill="#0000ff">20</text>
<text transform="translate(1449.0 37.0) scale(0.9 1)" fill="#0000ff">%</text>
<line x1="1486.5" y1="48" x2="1486.5" y2="628" stroke="#808080" stroke-width="1" shape-rendering="crispEdges"/>
<line x1="1481.5" y1="48.5" x2="1491.0" y2="48.5" stroke="#808080" stroke-width="1" shape-rendering="crispEdges"/>
<text transform="translate(1492.5 53.0) scale(0.9 1)" fill="#0499ff">16.0</text>
<line x1="1486.5" y1="120.5" x2="1491.0" y2="120.5" stroke="#808080" stroke-width="1" shape-rendering="crispEdges"/>
<text transform="translate(1492.5 125.0) scale(0.9 1)" fill="#0499ff">14.0</text>
<line x1="1486.5" y1="193.5" x2="1491.0" y2="193.5" stroke="#808080" stroke-width="1" shape-rendering="crispEdges"/>
<text transform="translate(1492.5 198.0) scale(0.9 1)" fill="#0499ff">12.0</text>
<line x1="1486.5" y1="266.5" x2="1491.0" y2="266.5" stroke="#808080" stroke-width="1" shape-rendering="crispEdges"/>
<text transform="translate(1492.5 271.0) scale(0.9 1)" fill="#0499ff">10.0</text>
<line x1="1486.5" y1="338.5" x2="1491.0" y2="338.5" stroke="#808080" stroke-width="1" shape-rendering="crispEdges"/>
<text transform="translate(1492.5 343.0) scale(0.9 1)" fill="#0499ff">8.0</text>
<line x1="1486.5" y1="410.5" x2="1491.0" y2="410.5" stroke="#808080" stroke-width="1" shape-rendering="crispEdges"/>
<text transform="translate(1492.5 415.0) scale(0.9 1)" fill="#0499ff">6.0</text>
<line x1="1486.5" y1="483.5" x2="1491.0" y2="483.5" stroke="#808080" stroke-width="1" shape-rendering="crispEdges"/>
<text transform="translate(1492.5 488.0) scale(0.9 1)" fill="#0499ff">4.0</text>
<line x1="1486.5" y1="556.5" x2="1491.0" y2="556.5" stroke="#808080" stroke-width="1" shape-rendering="crispEdges"/>
<text transform="translate(1492.5 561.0) scale(0.9 1)" fill="#0499ff">2.0</text>
<line x1="1481.5" y1="628.5" x2="1491.0" y2="628.5" stroke="#808080" stroke-width="1" shape-rendering="crispEdges"/>
<text transform="translate(1492.5 633.0) scale(0.9 1)" fill="#0499ff">0.0</text>
<text transform="translate(1487.0 37.0) scale(0.9 1)" fill="#0499ff">l/m²</text>
<line x1="1522.5" y1="48" x2="1522.5" y2="628" stroke="#808080" stroke-width="1" shape-rendering="crispEdges"/>
<line x1="1517.5" y1="48.5" x2="1527.0" y2="48.5" stroke="#808080" stroke-width="1" shape-rendering="crispEdges"/>
<text transform="translate(1528.5 53.0) scale(0.9 1)" fill="#000">360</text>
<text transform="translate(1549.3 53.0) scale(0.9 1)" fill="#000">N</text>
<line x1="1522.5" y1="120.5" x2="1527.0" y2="120.5" stroke="#808080" stroke-width="1" shape-rendering="crispEdges"/>
<text transform="translate(1528.5 125.0) scale(0.9 1)" fill="#000">315</text>
<line x1="1522.5" y1="193.5" x2="1527.0" y2="193.5" stroke="#808080" stroke-width="1" shape-rendering="crispEdges"/>
<text transform="translate(1528.5 198.0) scale(0.9 1)" fill="#000">270</text>
<text transform="translate(1550.8 198.0) scale(0.9 1)" fill="#000">W</text>
<line x1="1522.5" y1="266.5" x2="1527.0" y2="266.5" stroke="#808080" stroke-width="1" shape-rendering="crispEdges"/>
<text transform="translate(1528.5 271.0) scale(0.9 1)" fill="#000">225</text>
<line x1="1522.5" y1="338.5" x2="1527.0" y2="338.5" stroke="#808080" stroke-width="1" shape-rendering="crispEdges"/>
<text transform="translate(1528.5 343.0) scale(0.9 1)" fill="#000">180</text>
<text transform="translate(1549.8 343.0) scale(0.9 1)" fill="#000">S</text>
<line x1="1522.5" y1="410.5" x2="1527.0" y2="410.5" stroke="#808080" stroke-width="1" shape-rendering="crispEdges"/>
<text transform="translate(1528.5 415.0) scale(0.9 1)" fill="#000">135</text>
<line x1="1522.5" y1="483.5" x2="1527.0" y2="483.5" stroke="#808080" stroke-width="1" shape-rendering="crispEdges"/>
<text transform="translate(1528.5 488.0) scale(0.9 1)" fill="#000">90</text>
<text transform="translate(1546.8 488.0) scale(0.9 1)" fill="#000">O</text>
<line x1="1522.5" y1="556.5" x2="1527.0" y2="556.5" stroke="#808080" stroke-width="1" shape-rendering="crispEdges"/>
<text transform="translate(1528.5 561.0) scale(0.9 1)" fill="#000">45</text>
<line x1="1517.5" y1="628.5" x2="1527.0" y2="628.5" stroke="#808080" stroke-width="1" shape-rendering="crispEdges"/>
<text transform="translate(1528.5 633.0) scale(0.9 1)" fill="#000">0</text>
<text transform="translate(1547.3 633.0) scale(0.9 1)" fill="#000">N</text>
<text transform="translate(1523.0 37.0) scale(0.9 1)" fill="#000">°</text>
<line x1="1559.5" y1="48" x2="1559.5" y2="628" stroke="#808080" stroke-width="1" shape-rendering="crispEdges"/>
<line x1="1554.5" y1="48.5" x2="1564.0" y2="48.5" stroke="#808080" stroke-width="1" shape-rendering="crispEdges"/>
<text transform="translate(1565.5 53.0) scale(0.9 1)" fill="#ff1090">16.0</text>
<line x1="1559.5" y1="120.5" x2="1564.0" y2="120.5" stroke="#808080" stroke-width="1" shape-rendering="crispEdges"/>
<text transform="translate(1565.5 125.0) scale(0.9 1)" fill="#ff1090">14.0</text>
<line x1="1559.5" y1="193.5" x2="1564.0" y2="193.5" stroke="#808080" stroke-width="1" shape-rendering="crispEdges"/>
<text transform="translate(1565.5 198.0) scale(0.9 1)" fill="#ff1090">12.0</text>
<line x1="1559.5" y1="266.5" x2="1564.0" y2="266.5" stroke="#808080" stroke-width="1" shape-rendering="crispEdges"/>
<text transform="translate(1565.5 271.0) scale(0.9 1)" fill="#ff1090">10.0</text>
<line x1="1559.5" y1="338.5" x2="1564.0" y2="338.5" stroke="#808080" stroke-width="1" shape-rendering="crispEdges"/>
<text transform="translate(1565.5 343.0) scale(0.9 1)" fill="#ff1090">8.0</text>
<line x1="1559.5" y1="410.5" x2="1564.0" y2="410.5" stroke="#808080" stroke-width="1" shape-rendering="crispEdges"/>
<text transform="translate(1565.5 415.0) scale(0.9 1)" fill="#ff1090">6.0</text>
<line x1="1559.5" y1="483.5" x2="1564.0" y2="483.5" stroke="#808080" stroke-width="1" shape-rendering="crispEdges"/>
<text transform="translate(1565.5 488.0) scale(0.9 1)" fill="#ff1090">4.0</text>
<line x1="1559.5" y1="556.5" x2="1564.0" y2="556.5" stroke="#808080" stroke-width="1" shape-rendering="crispEdges"/>
<text transform="translate(1565.5 561.0) scale(0.9 1)" fill="#ff1090">2.0</text>
<line x1="1554.5" y1="628.5" x2="1564.0" y2="628.5" stroke="#808080" stroke-width="1" shape-rendering="crispEdges"/>
<text transform="translate(1565.5 633.0) scale(0.9 1)" fill="#ff1090">0.0</text>
<text transform="translate(1560.0 37.0) scale(0.9 1)" fill="#ff1090">UV-I</text>
<text transform="translate(10.5 658.0) scale(0.9 1)" fill="#000">15:04</text>
<path d="M40 657V654H41V652H43V651H46.3V652H48.3V654H49.3V657Z" fill="#ffff00" shape-rendering="crispEdges"/>
<text transform="translate(477.0 658.0) scale(0.9 1)" fill="#000">06:08</text>
<circle cx="510" cy="654" r="3.3" fill="#ffff00"/>
<path d="M510 648.3v11.4M504.3 654h11.4M506 650l8 8M514 650l-8 8" stroke="#ffff00" stroke-width="1" fill="none" opacity="0.45"/>
<line x1="510" y1="624" x2="510" y2="636.7" stroke="#ffff00" stroke-width="2" shape-rendering="crispEdges"/>
<text transform="translate(1268.5 658.0) scale(0.9 1)" fill="#000">21:12</text>
<rect x="1299.5" y="651.5" width="5" height="5" fill="none" stroke="#ffff60" stroke-width="1" shape-rendering="crispEdges"/>
<line x1="1302" y1="624" x2="1302" y2="636.5" stroke="#ffff00" stroke-width="2" shape-rendering="crispEdges"/>
<rect x="1" y="668" width="1598" height="72" fill="#c0ffff" shape-rendering="crispEdges"/>
<line x1="1599.5" y1="668" x2="1599.5" y2="740" stroke="#909090" stroke-width="1" shape-rendering="crispEdges"/>
<line x1="88.5" y1="668" x2="88.5" y2="740" stroke="#909090" stroke-width="1" shape-rendering="crispEdges"/>
<line x1="205.5" y1="668" x2="205.5" y2="740" stroke="#909090" stroke-width="1" shape-rendering="crispEdges"/>
<line x1="323.5" y1="668" x2="323.5" y2="740" stroke="#909090" stroke-width="1" shape-rendering="crispEdges"/>
<line x1="441.5" y1="668" x2="441.5" y2="740" stroke="#909090" stroke-width="1" shape-rendering="crispEdges"/>
<line x1="559.5" y1="668" x2="559.5" y2="740" stroke="#909090" stroke-width="1" shape-rendering="crispEdges"/>
<line x1="677.5" y1="668" x2="677.5" y2="740" stroke="#909090" stroke-width="1" shape-rendering="crispEdges"/>
<line x1="795.5" y1="668" x2="795.5" y2="740" stroke="#909090" stroke-width="1" shape-rendering="crispEdges"/>
<line x1="913.5" y1="668" x2="913.5" y2="740" stroke="#909090" stroke-width="1" shape-rendering="crispEdges"/>
<text transform="translate(8.5 686.0) scale(0.97 1)" class="b" fill="#000">Sensor</text>
<text transform="translate(8.5 702.0) scale(0.97 1)" class="b" fill="#000">MinWert</text>
<text transform="translate(8.5 718.0) scale(0.97 1)" class="b" fill="#000">MaxWert</text>
<text transform="translate(8.5 734.0) scale(0.97 1)" class="b" fill="#000">Durchschnitt</text>
<text transform="translate(95.0 686.0) scale(0.97 1)" class="b" fill="#000">Temp. A.</text>
<text transform="translate(198.9 686.0) scale(0.97 1)" class="b e" fill="#000">°C</text>
<text transform="translate(101.0 702.0) scale(0.9 1)" fill="#000">03:18</text>
<text transform="translate(198.9 702.0) scale(0.9 1)" class="e" fill="#000">14.2</text>
<text transform="translate(101.0 718.0) scale(0.9 1)" fill="#000">14:51</text>
<text transform="translate(198.9 718.0) scale(0.9 1)" class="e" fill="#000">23.8</text>
<text transform="translate(101.0 734.0) scale(0.9 1)" fill="#000">(+ 2.37 )</text>
<text transform="translate(198.9 734.0) scale(0.9 1)" class="e" fill="#000">18.87</text>
<text transform="translate(212.9 686.0) scale(0.97 1)" class="b" fill="#000">Feuchte A.</text>
<text transform="translate(316.7 686.0) scale(0.97 1)" class="b e" fill="#000">%</text>
<text transform="translate(218.9 702.0) scale(0.9 1)" fill="#000">16:15</text>
<text transform="translate(316.7 702.0) scale(0.9 1)" class="e" fill="#000">65</text>
<text transform="translate(218.9 718.0) scale(0.9 1)" fill="#000">08:06</text>
<text transform="translate(316.7 718.0) scale(0.9 1)" class="e" fill="#000">95</text>
<text transform="translate(316.7 734.0) scale(0.9 1)" class="e" fill="#000">84</text>
<text transform="translate(330.7 686.0) scale(0.97 1)" class="b" fill="#000">Luftdruck</text>
<text transform="translate(434.6 686.0) scale(0.97 1)" class="b e" fill="#000">hPa</text>
<text transform="translate(336.7 702.0) scale(0.9 1)" fill="#000">03:21</text>
<text transform="translate(434.6 702.0) scale(0.9 1)" class="e" fill="#000">1011.0</text>
<text transform="translate(336.7 718.0) scale(0.9 1)" fill="#000">23:33</text>
<text transform="translate(434.6 718.0) scale(0.9 1)" class="e" fill="#000">1014.0</text>
<text transform="translate(330.7 734.0) scale(0.9 1)" fill="#000">^1.0hPa/h</text>
<text transform="translate(434.6 734.0) scale(0.9 1)" class="e" fill="#000">1012.2</text>
<text transform="translate(448.6 686.0) scale(0.97 1)" class="b" fill="#000">Regen</text>
<text transform="translate(552.4 686.0) scale(0.97 1)" class="b e" fill="#000">l/m²</text>
<text transform="translate(454.6 718.0) scale(0.9 1)" fill="#000">00:00</text>
<text transform="translate(552.4 718.0) scale(0.9 1)" class="e" fill="#000">0.0</text>
<text transform="translate(448.6 734.0) scale(0.9 1)" fill="#000">Gesamt:</text>
<text transform="translate(552.4 734.0) scale(0.9 1)" class="e" fill="#000">0.0</text>
<text transform="translate(566.4 686.0) scale(0.97 1)" class="b" fill="#000">Wind</text>
<text transform="translate(670.3 686.0) scale(0.97 1)" class="b e" fill="#000">km/h</text>
<text transform="translate(566.4 702.0) scale(0.9 1)" fill="#000">Ø 10 min.</text>
<text transform="translate(670.3 702.0) scale(0.9 1)" class="e" fill="#000">1.8</text>
<text transform="translate(572.4 718.0) scale(0.9 1)" fill="#000">17:06</text>
<text transform="translate(670.3 718.0) scale(0.9 1)" class="e" fill="#000">SW 20.9</text>
<text transform="translate(670.3 734.0) scale(0.9 1)" class="e" fill="#000">6.4</text>
<text transform="translate(684.3 686.0) scale(0.97 1)" class="b" fill="#000">Windböen</text>
<text transform="translate(788.2 686.0) scale(0.97 1)" class="b e" fill="#000">km/h</text>
<text transform="translate(684.3 702.0) scale(0.9 1)" fill="#000">Ø 10 min.</text>
<text transform="translate(788.2 702.0) scale(0.9 1)" class="e" fill="#000">3.2</text>
<text transform="translate(690.3 718.0) scale(0.9 1)" fill="#000">16:15</text>
<text transform="translate(788.2 718.0) scale(0.9 1)" class="e" fill="#000">W-NW 30.6</text>
<text transform="translate(788.2 734.0) scale(0.9 1)" class="e" fill="#000">9.8</text>
<text transform="translate(802.2 686.0) scale(0.97 1)" class="b" fill="#000">Solar</text>
<text transform="translate(906.0 686.0) scale(0.97 1)" class="b e" fill="#000">W/m²</text>
<text transform="translate(802.2 702.0) scale(0.9 1)" fill="#000">Elevation</text>
<text transform="translate(906.0 702.0) scale(0.9 1)" class="e" fill="#000">-19.196</text>
<text transform="translate(808.2 718.0) scale(0.9 1)" fill="#000">12:36</text>
<text transform="translate(906.0 718.0) scale(0.9 1)" class="e" fill="#000">759</text>
<text transform="translate(802.2 734.0) scale(0.9 1)" fill="#000">4:54 h</text>
<text transform="translate(906.0 734.0) scale(0.9 1)" class="e" fill="#000">168</text>
<text transform="translate(920.0 686.0) scale(0.97 1)" class="b" fill="#000">UV</text>
<text transform="translate(1021.2 686.0) scale(0.97 1)" class="b e" fill="#000">UV-I</text>
<text transform="translate(926.0 702.0) scale(0.9 1)" fill="#000">00:00</text>
<text transform="translate(1022.5 702.0) scale(0.9 1)" class="e" fill="#000">0.0</text>
<text transform="translate(926.0 718.0) scale(0.9 1)" fill="#000">13:33</text>
<text transform="translate(1022.5 718.0) scale(0.9 1)" class="e" fill="#000">4.9</text>
<text transform="translate(1022.5 734.0) scale(0.9 1)" class="e" fill="#000">2.6</text>
</svg></body></html>
